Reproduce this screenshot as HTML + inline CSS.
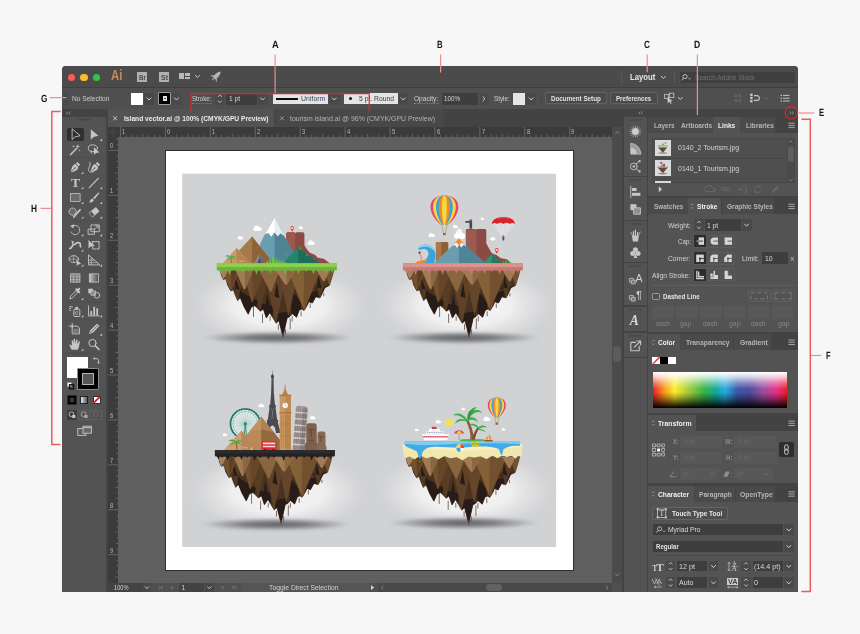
<!DOCTYPE html>
<html lang="en"><head><meta charset="utf-8"><title>Illustrator workspace</title>
<style>
*{box-sizing:border-box;margin:0;padding:0}
html,body{width:860px;height:634px;overflow:hidden;background:#f7f7f7}
body{position:relative;font-family:"Liberation Sans",sans-serif;font-size:7px;color:#ddd}
.a{position:absolute}
.t{position:absolute;white-space:nowrap;line-height:1}
#w{position:absolute;left:0;top:0;width:860px;height:634px;will-change:transform}
svg{overflow:visible}
</style></head>
<body>
<div id="w">
<!-- s_frame -->
<div class="a" style="left:62px;top:66px;width:736px;height:526px;background:#535353;border-radius:4px 4px 0 0"></div>
<div class="a" style="left:62px;top:66px;width:736px;height:21px;background:#4b4b4b;border-radius:4px 4px 0 0"></div>
<div class="a" style="left:62px;top:87px;width:736px;height:1px;background:#3e3e3e;"></div>
<div class="a" style="left:62px;top:88px;width:736px;height:21px;background:#4f4f4f;"></div>
<div class="a" style="left:62px;top:109px;width:736px;height:18px;background:#434343;"></div>
<div class="a" style="left:62px;top:117px;width:46px;height:475px;background:#535353;"></div>
<div class="a" style="left:622px;top:109px;width:176px;height:483px;background:#434343;"></div>
<div class="a" style="left:624px;top:117px;width:22.6px;height:475px;background:#535353;"></div>
<div class="a" style="left:649px;top:117px;width:149px;height:475px;background:#535353;"></div>
<!-- s_top -->
<div class="a" style="left:67.6px;top:73.7px;width:7.6px;height:7.6px;background:#fc5b57;border-radius:50%"></div>
<div class="a" style="left:80px;top:73.7px;width:7.6px;height:7.6px;background:#fbbb2f;border-radius:50%"></div>
<div class="a" style="left:92.6px;top:73.7px;width:7.6px;height:7.6px;background:#2ec840;border-radius:50%"></div>
<div class="t" style="left:111px;top:69px;font-size:13.8px;color:#c48a5e;font-weight:bold;transform:scaleX(0.826);transform-origin:0 0;">Ai</div>
<div class="a" style="left:137px;top:72px;width:10.2px;height:10.2px;background:#b0b0b0;"></div>
<div class="t" style="left:138.6px;top:74px;font-size:7.4px;color:#4c4c4c;font-weight:bold;transform:scaleX(0.851);transform-origin:0 0;">Br</div>
<div class="a" style="left:159.1px;top:72px;width:10.2px;height:10.2px;background:#b0b0b0;"></div>
<div class="t" style="left:160.7px;top:74px;font-size:7.4px;color:#4c4c4c;font-weight:bold;transform:scaleX(0.946);transform-origin:0 0;">St</div>
<div class="a" style="left:179.2px;top:72.9px;width:4.8px;height:6.4px;background:#b9b9b9;"></div>
<div class="a" style="left:184.9px;top:72.9px;width:5.2px;height:2.7px;background:#b9b9b9;"></div>
<div class="a" style="left:184.9px;top:76.6px;width:5.2px;height:2.7px;background:#b9b9b9;"></div>
<div class="t" style="left:629.5px;top:73px;font-size:8.4px;color:#e6e6e6;font-weight:bold;transform:scaleX(0.926);transform-origin:0 0;">Layout</div>
<div class="a" style="left:679.8px;top:72px;width:115.2px;height:11px;background:#3f3f3f;border-radius:1px"></div>
<div class="t" style="left:695px;top:74px;font-size:7.6px;color:#727272;transform:scaleX(0.867);transform-origin:0 0;">Search Adobe Stock</div>
<div class="t" style="left:71.6px;top:95px;font-size:7.5px;color:#c9ccd2;transform:scaleX(0.879);transform-origin:0 0;">No Selection</div>
<div class="a" style="left:131.2px;top:92.5px;width:12.1px;height:12px;background:#ffffff;"></div>
<div class="a" style="left:143.6px;top:92.5px;width:10px;height:12px;background:#474747;"></div>
<div class="a" style="left:158.1px;top:92.1px;width:12.8px;height:12.6px;background:#000;border:1px solid #9a9a9a;border-radius:1px"></div>
<div class="a" style="left:162.6px;top:96.4px;width:4.4px;height:4.4px;background:#e4e4e4;"></div>
<div class="a" style="left:164px;top:97.8px;width:1.7px;height:1.7px;background:#555;"></div>
<div class="a" style="left:171.2px;top:92.5px;width:10.6px;height:12px;background:#4a4a4a;"></div>
<div class="t" style="left:191.6px;top:95px;font-size:7.5px;color:#d0d0d0;transform:scaleX(0.817);transform-origin:0 0;border-bottom:1px dotted #808080;padding-bottom:0.5px">Stroke:</div>
<div class="a" style="left:214.9px;top:92.5px;width:9.5px;height:12px;background:#494949;"></div>
<div class="a" style="left:226.2px;top:92.5px;width:30.8px;height:12px;background:#3e3e3e;"></div>
<div class="t" style="left:228.8px;top:95px;font-size:7.5px;color:#cfd3dc;transform:scaleX(0.895);transform-origin:0 0;">1 pt</div>
<div class="a" style="left:257.6px;top:92.5px;width:10.4px;height:12px;background:#494949;"></div>
<div class="a" style="left:272.9px;top:92.7px;width:55.2px;height:11.8px;background:#e4e4e4;"></div>
<div class="a" style="left:276.2px;top:97.7px;width:21.7px;height:1.9px;background:#0a0a0a;"></div>
<div class="t" style="left:300.6px;top:95px;font-size:7.5px;color:#3d4668;transform:scaleX(0.929);transform-origin:0 0;">Uniform</div>
<div class="a" style="left:329px;top:92.5px;width:10.5px;height:12px;background:#494949;"></div>
<div class="a" style="left:344px;top:92.7px;width:53.7px;height:11.8px;background:#e4e4e4;"></div>
<div class="a" style="left:348.6px;top:97.2px;width:3px;height:3px;background:#111;border-radius:50%"></div>
<div class="t" style="left:359px;top:95px;font-size:7.5px;color:#3a3a3a;transform:scaleX(0.903);transform-origin:0 0;">5 pt. Round</div>
<div class="a" style="left:398.7px;top:92.5px;width:9.6px;height:12px;background:#494949;"></div>
<div class="t" style="left:413.7px;top:95px;font-size:7.5px;color:#d0d0d0;transform:scaleX(0.876);transform-origin:0 0;border-bottom:1px dotted #808080;padding-bottom:0.5px">Opacity:</div>
<div class="a" style="left:442.4px;top:92.5px;width:35.6px;height:12px;background:#3e3e3e;"></div>
<div class="t" style="left:444.4px;top:95px;font-size:7.5px;color:#cfd3dc;transform:scaleX(0.834);transform-origin:0 0;">100%</div>
<div class="a" style="left:480px;top:92.5px;width:9.2px;height:12px;background:#494949;"></div>
<div class="t" style="left:493.6px;top:95px;font-size:7.5px;color:#d0d0d0;transform:scaleX(0.837);transform-origin:0 0;">Style:</div>
<div class="a" style="left:513px;top:92.5px;width:12.3px;height:12px;background:#e6e6e6;"></div>
<div class="a" style="left:525.8px;top:92.5px;width:10.2px;height:12px;background:#494949;"></div>
<div class="a" style="left:544.5px;top:92.2px;width:62.3px;height:12.2px;background:#4a4a4a;border:1px solid #626262;border-radius:2px"></div>
<div class="t" style="left:550.8px;top:95px;font-size:7.4px;color:#e2e2e2;font-weight:bold;transform:scaleX(0.849);transform-origin:0 0;">Document Setup</div>
<div class="a" style="left:610px;top:92.2px;width:47.8px;height:12.2px;background:#4a4a4a;border:1px solid #626262;border-radius:2px"></div>
<div class="t" style="left:616px;top:95px;font-size:7.4px;color:#e2e2e2;font-weight:bold;transform:scaleX(0.833);transform-origin:0 0;">Preferences</div>
<div class="a" style="left:108px;top:109px;width:166.2px;height:18px;background:#535353;"></div>
<div class="a" style="left:274.6px;top:109px;width:169px;height:18px;background:#484848;"></div>
<div class="t" style="left:123.5px;top:115px;font-size:7.4px;color:#ececec;font-weight:bold;transform:scaleX(0.900);transform-origin:0 0;">Island vector.ai @ 100% (CMYK/GPU Preview)</div>
<div class="t" style="left:290.4px;top:115px;font-size:7.6px;color:#b4b4b4;transform:scaleX(0.913);transform-origin:0 0;">tourism island.ai @ 96% (CMYK/GPU Preview)</div>
<svg class="a" style="left:0;top:0" width="860" height="634" viewBox="0 0 860 634"><polyline points="195.15,75.1 197.4,77.5 199.65,75.1" fill="none" stroke="#cfcfcf" stroke-width="1"/><g transform="translate(215.8,76.4) rotate(45)" fill="#b5b5b5"><path d="M0,-7 C2.2,-4.5 2.4,-1 1.8,2.5 L-1.8,2.5 C-2.4,-1 -2.2,-4.5 0,-7Z"/><path d="M-2,0 L-4.6,3.6 L-2,2.6Z"/><path d="M2,0 L4.6,3.6 L2,2.6Z"/><path d="M-1,3.2 L1,3.2 L0,5.4Z"/></g><line x1="621.7" y1="71" x2="621.7" y2="83" stroke="#5c5c5c" stroke-width="1"/><line x1="674.7" y1="71" x2="674.7" y2="83" stroke="#5c5c5c" stroke-width="1"/><polyline points="661.15,76.1 663.4,78.5 665.65,76.1" fill="none" stroke="#cfcfcf" stroke-width="1"/><circle cx="685" cy="76.6" r="2.1" fill="none" stroke="#c4c4c4" stroke-width="0.9"/><line x1="683.4" y1="78.3" x2="681.6" y2="80.4" stroke="#c4c4c4" stroke-width="1"/><polyline points="688.4,78 689.6,79.2 690.8,78" fill="none" stroke="#c4c4c4" stroke-width="0.8"/><line x1="66" y1="92" x2="66" y2="105" stroke="#3c3c3c" stroke-width="1.6" stroke-dasharray="1 1"/><polyline points="146.75,97.6 149,100 151.25,97.6" fill="none" stroke="#cfcfcf" stroke-width="1"/><polyline points="174.25,97.6 176.5,100 178.75,97.6" fill="none" stroke="#cfcfcf" stroke-width="1"/><polyline points="218,96.8 219.8,94.8 221.6,96.8" fill="none" stroke="#c8c8c8" stroke-width="0.9"/><polyline points="218,100.6 219.8,102.6 221.6,100.6" fill="none" stroke="#c8c8c8" stroke-width="0.9"/><polyline points="260.35,97.6 262.6,100 264.85,97.6" fill="none" stroke="#cfcfcf" stroke-width="1"/><polyline points="332.05,97.6 334.3,100 336.55,97.6" fill="none" stroke="#cfcfcf" stroke-width="1"/><polyline points="401.05,97.6 403.3,100 405.55,97.6" fill="none" stroke="#cfcfcf" stroke-width="1"/><polyline points="482.6,96.4 485,98.7 482.6,101" fill="none" stroke="#cfcfcf" stroke-width="1"/><polyline points="528.95,97.6 531.2,100 533.45,97.6" fill="none" stroke="#cfcfcf" stroke-width="1"/><line x1="541.3" y1="92" x2="541.3" y2="105" stroke="#454545" stroke-width="1"/><rect x="664.6" y="94.4" width="4" height="4" fill="none" stroke="#bdbdbd" stroke-width="0.9"/><rect x="669.4" y="93.2" width="4.4" height="4.4" fill="none" stroke="#bdbdbd" stroke-width="0.9"/><path d="M667.6,97 L667.6,103.4 L669.4,101.8 L670.6,104 L671.6,103.4 L670.4,101.4 L672.6,101.2Z" fill="#c8c8c8"/><polyline points="678.05,97.1 680.3,99.5 682.55,97.1" fill="none" stroke="#cfcfcf" stroke-width="1"/><g fill="#646464"><rect x="734.6" y="94.6" width="2.6" height="2.6"/><rect x="738.8" y="94.6" width="2.6" height="2.6"/><rect x="734.6" y="99" width="2.6" height="2.6"/><rect x="738.8" y="99" width="2.6" height="2.6"/></g><g fill="#c6c6c6"><rect x="750.2" y="93.6" width="2.4" height="2.4"/><rect x="750.2" y="96.8" width="2.4" height="2.4"/><rect x="750.2" y="100" width="2.4" height="2.4"/></g><path d="M754,95.6 h3 a2.4,2.4 0 0 1 0,4.8 h-3" fill="none" stroke="#c6c6c6" stroke-width="1.1"/><polyline points="764.1,97.2 766.3,99.4 768.5,97.2" fill="none" stroke="#6c6c6c" stroke-width="1"/><g stroke="#c6c6c6" stroke-width="1"><line x1="783" y1="95.4" x2="789.6" y2="95.4"/><line x1="783" y1="98.2" x2="789.6" y2="98.2"/><line x1="783" y1="101" x2="789.6" y2="101"/></g><g fill="#c6c6c6"><rect x="780.6" y="94.8" width="1.3" height="1.3"/><rect x="780.6" y="97.6" width="1.3" height="1.3"/><rect x="780.6" y="100.4" width="1.3" height="1.3"/></g><path d="M113.2,116.4 l3.8,3.8 M117,116.4 l-3.8,3.8" stroke="#d0d0d0" stroke-width="0.9" fill="none"/><path d="M280.1,116.4 l3.8,3.8 M283.9,116.4 l-3.8,3.8" stroke="#9c9c9c" stroke-width="0.9" fill="none"/></svg>
<!-- s_tools -->
<div class="a" style="left:62px;top:109.5px;width:44.3px;height:7.3px;background:#434343;"></div>
<div class="a" style="left:106.3px;top:109px;width:2px;height:483px;background:#444;"></div>
<div class="a" style="left:66.9px;top:127.5px;width:17.1px;height:13.4px;background:#2f2f2f;border-radius:2px"></div>
<div class="t" style="left:70.8px;top:176px;font-size:13.4px;color:#c6c6c6;font-weight:bold;font-family:'Liberation Serif',serif;transform:scaleX(1.007);transform-origin:0 0;">T</div>
<div class="a" style="left:66.9px;top:356.9px;width:21.1px;height:21.2px;background:#fff;"></div>
<div class="a" style="left:77.2px;top:367.5px;width:22px;height:22.4px;background:#000;border:1px solid #8c8c8c;border-radius:1px"></div>
<div class="a" style="left:82.1px;top:372.6px;width:12.2px;height:12.3px;background:#555;border:1px solid #b4b4b4"></div>
<div class="a" style="left:67px;top:394.6px;width:10.2px;height:10.7px;background:#2c2c2c;"></div>
<div class="a" style="left:68.3px;top:396px;width:7.6px;height:7.8px;background:#050505;"></div>
<div class="a" style="left:70.3px;top:398px;width:3.6px;height:3.8px;background:#3c3c3c;"></div>
<div class="a" style="left:80.2px;top:396px;width:8px;height:8px;background:linear-gradient(90deg,#e8e8e8,#555);border:1px solid #222"></div>
<div class="a" style="left:92.6px;top:396px;width:8px;height:8px;background:#fff;border:1px solid #333"></div>
<div class="a" style="left:67px;top:409.8px;width:35.2px;height:10.2px;background:transparent;border:1px solid #5e5e5e;border-radius:1px"></div>
<div class="a" style="left:67px;top:409.8px;width:10.4px;height:10.2px;background:#3c3c3c;"></div>
<svg class="a" style="left:0;top:0" width="860" height="634" viewBox="0 0 860 634"><polyline points="67.95,111.7 66.45,113 67.95,114.3" fill="none" stroke="#9a9a9a" stroke-width="0.8"/><polyline points="70.35,111.7 68.85,113 70.35,114.3" fill="none" stroke="#9a9a9a" stroke-width="0.8"/><line x1="78" y1="119.6" x2="91" y2="119.6" stroke="#3a3a3a" stroke-width="1.6" stroke-dasharray="1 1.3"/><line x1="66" y1="157.4" x2="103" y2="157.4" stroke="#4e4e4e" stroke-width="1"/><line x1="66" y1="220.6" x2="103" y2="220.6" stroke="#4e4e4e" stroke-width="1"/><line x1="66" y1="268.8" x2="103" y2="268.8" stroke="#4e4e4e" stroke-width="1"/><line x1="66" y1="302.3" x2="103" y2="302.3" stroke="#4e4e4e" stroke-width="1"/><line x1="66" y1="320" x2="103" y2="320" stroke="#4e4e4e" stroke-width="1"/><line x1="66" y1="353.3" x2="103" y2="353.3" stroke="#4e4e4e" stroke-width="1"/><g transform="translate(75.2,134.5)" fill="none" stroke="#c6c6c6" stroke-width="1" stroke-linejoin="round" stroke-linecap="round"><path d="M-3.1,-5.3 L-3.1,5.3 L-0.6,2.6 L4.5,1.3Z" stroke-width="0.9"/></g><g transform="translate(93.9,134.5)" fill="none" stroke="#c6c6c6" stroke-width="1" stroke-linejoin="round" stroke-linecap="round"><path d="M-3.1,-5.3 L-3.1,5.3 L-0.4,2.4 L4.5,1.3Z" fill="#c6c6c6" stroke="none"/></g><path d="M102.1,138.7 v2.2 h-2.2Z" fill="#d0d0d0"/><g transform="translate(75.2,149.6)" fill="none" stroke="#c6c6c6" stroke-width="1" stroke-linejoin="round" stroke-linecap="round"><path d="M-4.6,5 L1.6,-1.4" stroke-width="1.5"/><path d="M2.6,-5.4 l0.6,1.5 l1.5,0.6 l-1.5,0.6 l-0.6,1.5 l-0.6,-1.5 l-1.5,-0.6 l1.5,-0.6Z M-1.6,-4.6 l0.4,0.9 l0.9,0.4 l-0.9,0.4 l-0.4,0.9 l-0.4,-0.9 l-0.9,-0.4 l0.9,-0.4Z M4.2,-0.2 l0.3,0.7 l0.7,0.3 l-0.7,0.3 l-0.3,0.7 l-0.3,-0.7 l-0.7,-0.3 l0.7,-0.3Z" fill="#c6c6c6" stroke="none"/></g><g transform="translate(93.9,149.6)" fill="none" stroke="#c6c6c6" stroke-width="1" stroke-linejoin="round" stroke-linecap="round"><ellipse cx="-1" cy="-1.4" rx="4.6" ry="3.4" stroke-width="0.9"/><path d="M-3,1.2 c-1,1.6 0.6,3 1.4,1.6" stroke-width="0.8"/><path d="M0,-2.6 L0,5.4 L2,3.4 L5.4,3Z" fill="#c6c6c6" stroke="none"/></g><g transform="translate(75.2,167.5)" fill="none" stroke="#c6c6c6" stroke-width="1" stroke-linejoin="round" stroke-linecap="round"><path d="M2.2,-5.6 L5,-2.8 L3.4,-1.2 L0.6,-4Z M0,-3.6 L3,-0.6 C3,2 1,3.6 -4.6,4.8 C-3.4,-0.8 -2.2,-3 0,-3.6Z" fill="#c6c6c6" stroke="none"/><path d="M-4.2,4.4 L-0.6,0.8" stroke="#535353" stroke-width="0.8"/><circle cx="-0.3" cy="0.5" r="0.8" fill="#535353" stroke="none"/></g><path d="M83.4,171.7 v2.2 h-2.2Z" fill="#d0d0d0"/><g transform="translate(95.1,167.5)" fill="none" stroke="#c6c6c6" stroke-width="1" stroke-linejoin="round" stroke-linecap="round"><path d="M2.2,-5.6 L5,-2.8 L3.4,-1.2 L0.6,-4Z M0,-3.6 L3,-0.6 C3,2 1,3.6 -4.6,4.8 C-3.4,-0.8 -2.2,-3 0,-3.6Z" fill="#c6c6c6" stroke="none"/><path d="M-4.2,4.4 L-0.6,0.8" stroke="#535353" stroke-width="0.8"/><circle cx="-0.3" cy="0.5" r="0.8" fill="#535353" stroke="none"/><path d="M-5.4,-5.2 c2.4,2 -2.4,5.4 -1,8.6 c1,1.6 3,1 4.4,1" stroke-width="0.9"/></g><path d="M83.4,186.9 v2.2 h-2.2Z" fill="#d0d0d0"/><g transform="translate(93.9,182.7)" fill="none" stroke="#c6c6c6" stroke-width="1" stroke-linejoin="round" stroke-linecap="round"><path d="M-4.6,5 L4.4,-4.4" stroke-width="1.2"/></g><path d="M102.1,186.9 v2.2 h-2.2Z" fill="#d0d0d0"/><g transform="translate(75.2,197.6)" fill="none" stroke="#c6c6c6" stroke-width="1" stroke-linejoin="round" stroke-linecap="round"><rect x="-4.7" y="-4" width="9.6" height="7.8" fill="#6b6b6b" stroke-width="0.8" stroke-linejoin="miter"/></g><path d="M83.4,201.8 v2.2 h-2.2Z" fill="#d0d0d0"/><g transform="translate(93.9,197.6)" fill="none" stroke="#c6c6c6" stroke-width="1" stroke-linejoin="round" stroke-linecap="round"><path d="M4.6,-5.4 L5.4,-4.4 L0.6,1.6 L-0.8,0.4Z M-1.6,1 L0,2.4 C-0.6,4.6 -2.6,5 -5,5 C-3.6,4 -3.6,1.6 -1.6,1Z" fill="#c6c6c6" stroke="none"/></g><path d="M102.1,201.8 v2.2 h-2.2Z" fill="#d0d0d0"/><g transform="translate(75.2,212.2)" fill="none" stroke="#c6c6c6" stroke-width="1" stroke-linejoin="round" stroke-linecap="round"><circle cx="-2.6" cy="-0.6" r="3.6" fill="#6b6b6b" stroke-width="0.8" stroke-dasharray="1.2 0.7"/><path d="M-1.4,4.8 L4.8,-2.4" stroke-width="1.8"/></g><path d="M83.4,216.4 v2.2 h-2.2Z" fill="#d0d0d0"/><g transform="translate(93.9,212.2)" fill="none" stroke="#c6c6c6" stroke-width="1" stroke-linejoin="round" stroke-linecap="round"><g transform="rotate(-40)"><rect x="-4.6" y="-2.8" width="9.4" height="5.8" rx="0.8" fill="#c6c6c6" stroke="none"/><rect x="-4.1" y="-2.3" width="2.6" height="4.8" fill="#535353" stroke="none"/></g></g><path d="M102.1,216.4 v2.2 h-2.2Z" fill="#d0d0d0"/><g transform="translate(75.2,229.9)" fill="none" stroke="#c6c6c6" stroke-width="1" stroke-linejoin="round" stroke-linecap="round"><path d="M-2.4,-3.8 A4.6,4.6 0 1 1 -4.4,1.6" stroke-width="0.9" stroke-dasharray="2 0.8"/><path d="M-5.2,-4 L-1,-5.6 L-1.8,-1.6Z" fill="#c6c6c6" stroke="none"/></g><path d="M83.4,234.1 v2.2 h-2.2Z" fill="#d0d0d0"/><g transform="translate(93.9,229.9)" fill="none" stroke="#c6c6c6" stroke-width="1" stroke-linejoin="round" stroke-linecap="round"><rect x="-5.4" y="-0.8" width="6" height="5.2" stroke-width="0.9"/><rect x="-2.6" y="-5" width="8" height="6.8" stroke-width="0.9"/><path d="M0.6,-0.6 L4,-3.8 M4.2,-1.6 V-4 H1.8" stroke-width="0.8"/></g><path d="M102.1,234.1 v2.2 h-2.2Z" fill="#d0d0d0"/><g transform="translate(75.2,245)" fill="none" stroke="#c6c6c6" stroke-width="1" stroke-linejoin="round" stroke-linecap="round"><path d="M-5.4,3.4 C-2.6,3.4 -3.6,-0.4 -1.4,-0.4 C0.8,-0.4 0.6,-3.6 4.6,-2 C5.6,-1 4.6,1.4 5.4,1.8" stroke-width="1.7"/><path d="M-3.8,-4.8 L-1,-3 L-3,-0.6Z" fill="#c6c6c6" stroke="none"/></g><path d="M83.4,249.2 v2.2 h-2.2Z" fill="#d0d0d0"/><g transform="translate(93.9,245)" fill="none" stroke="#c6c6c6" stroke-width="1" stroke-linejoin="round" stroke-linecap="round"><rect x="-1.2" y="-3.4" width="6.4" height="7.4" stroke-width="1" stroke-dasharray="1.4 1"/><path d="M-5.4,-5 L-5.4,3.6 L-3.2,1.6 L0.8,0.8Z" fill="#c6c6c6" stroke="none"/></g><g transform="translate(75.2,260.1)" fill="none" stroke="#c6c6c6" stroke-width="1" stroke-linejoin="round" stroke-linecap="round"><ellipse cx="-1.4" cy="-1" rx="4.8" ry="3.4" stroke-width="0.9"/><path d="M-1.6,-4.4 V2.2 M-6,-1 H3" stroke-width="0.6"/><path d="M1.4,-0.4 L1.4,6 L3,4.4 L6,4Z" fill="#c6c6c6" stroke="none"/></g><path d="M83.4,264.3 v2.2 h-2.2Z" fill="#d0d0d0"/><g transform="translate(93.9,260.1)" fill="none" stroke="#c6c6c6" stroke-width="1" stroke-linejoin="round" stroke-linecap="round"><path d="M-5.4,-4.8 V4.8 H5.6Z" stroke-width="0.9"/><path d="M-5.4,0 L0.2,0.2 M-2.6,-2.4 V4.8 M-5.4,2.6 H3" stroke-width="0.7"/></g><path d="M102.1,264.3 v2.2 h-2.2Z" fill="#d0d0d0"/><g transform="translate(75.2,278)" fill="none" stroke="#c6c6c6" stroke-width="1" stroke-linejoin="round" stroke-linecap="round"><rect x="-4.6" y="-4.1" width="9.3" height="8.2" fill="#777" stroke-width="0.8" stroke-linejoin="miter"/><path d="M-4.6,-1.4 C-2,-3 2,0.4 4.7,-1.6 M-4.6,1.6 C-2,0.4 2,3.2 4.7,1.2 M-1.8,-4.1 C-0.4,-2 -3,2 -1.6,4.1 M1.8,-4.1 C3,-2 0.6,2 2,4.1" stroke-width="0.6"/></g><defs><linearGradient id="tg" x1="0" x2="1" y1="0" y2="0"><stop offset="0" stop-color="#c8c8c8"/><stop offset="1" stop-color="#4a4a4a"/></linearGradient></defs><g transform="translate(93.9,278)" fill="none" stroke="#c6c6c6" stroke-width="1" stroke-linejoin="round" stroke-linecap="round"><rect x="-4.6" y="-4.1" width="9.3" height="8.2" fill="url(#tg)" stroke-width="0.8" stroke-linejoin="miter"/></g><g transform="translate(75.2,293.5)" fill="none" stroke="#c6c6c6" stroke-width="1" stroke-linejoin="round" stroke-linecap="round"><path d="M-5.2,5 L-4.6,2.6 L0.8,-2.8 L2.6,-1 L-2.8,4.4Z" stroke-width="0.9"/><path d="M1,-4.2 L4,-1.2 M2.2,-3 L4,-4.8" stroke-width="2"/></g><path d="M83.4,297.7 v2.2 h-2.2Z" fill="#d0d0d0"/><g transform="translate(93.9,293.5)" fill="none" stroke="#c6c6c6" stroke-width="1" stroke-linejoin="round" stroke-linecap="round"><rect x="-5.6" y="-4.8" width="4.6" height="4.6" fill="#c6c6c6" stroke="none"/><rect x="-2.8" y="-2.6" width="4.4" height="4.4" fill="#8a8a8a" stroke-width="0.7"/><circle cx="3" cy="1.8" r="2.8" stroke-width="0.9"/></g><g transform="translate(75.2,310.9)" fill="none" stroke="#c6c6c6" stroke-width="1" stroke-linejoin="round" stroke-linecap="round"><rect x="-1.4" y="-1.6" width="6" height="7.2" rx="1" stroke-width="1"/><rect x="0.2" y="-4" width="2.8" height="2.2" fill="#c6c6c6" stroke="none"/><path d="M-5.6,-4.2 h3 M-5.6,-2.4 h1.6 M-5.6,-0.6 h1.6" stroke-width="0.9" stroke-dasharray="1 0.8"/><path d="M2.6,1 a1.4,1.4 0 1 0 0,2" stroke-width="0.8"/></g><path d="M83.4,315.1 v2.2 h-2.2Z" fill="#d0d0d0"/><g transform="translate(93.9,310.9)" fill="none" stroke="#c6c6c6" stroke-width="1" stroke-linejoin="round" stroke-linecap="round"><path d="M-5.4,-5 V5 H5.6" stroke-width="0.9"/><rect x="-3.6" y="0" width="1.8" height="4.6" fill="#c6c6c6" stroke="none"/><rect x="-0.6" y="-4.2" width="1.8" height="8.8" fill="#c6c6c6" stroke="none"/><rect x="2.4" y="-2.6" width="1.8" height="7.2" fill="#c6c6c6" stroke="none"/></g><path d="M102.1,315.1 v2.2 h-2.2Z" fill="#d0d0d0"/><g transform="translate(75.2,329.3)" fill="none" stroke="#c6c6c6" stroke-width="1" stroke-linejoin="round" stroke-linecap="round"><path d="M-3,-6 V-1.6 M-6,-3.2 H2.2 L4.2,-1.2 V4.6 H-3 V-3.2" stroke-width="1"/><rect x="-2.4" y="-0.6" width="6" height="4.6" fill="#7a7a7a" stroke="none"/></g><g transform="translate(93.9,329.3)" fill="none" stroke="#c6c6c6" stroke-width="1" stroke-linejoin="round" stroke-linecap="round"><path d="M3,-5.6 L5.6,-3.6 L-0.6,3.2 L-5,5 L-3.6,1Z" fill="#c6c6c6" stroke="none"/><path d="M-3.4,3.6 L3.6,-3.8" stroke="#535353" stroke-width="0.7"/></g><path d="M102.1,333.5 v2.2 h-2.2Z" fill="#d0d0d0"/><g transform="translate(75.2,344.4)" fill="none" stroke="#c6c6c6" stroke-width="1" stroke-linejoin="round" stroke-linecap="round"><path d="M-3.6,5.4 C-4.4,3.2 -6,1.6 -5.6,0.4 C-4.8,-0.2 -4,0.8 -3.2,1.6 L-3.6,-3.4 C-3.4,-4.4 -2.4,-4.4 -2.2,-3.4 L-1.8,-0.6 L-1.6,-4.8 C-1.4,-5.8 -0.2,-5.8 0,-4.8 L0.2,-0.6 L1,-4.2 C1.4,-5.2 2.4,-5 2.4,-4 L2.2,0 L3.4,-2.6 C4,-3.4 4.8,-3 4.6,-2 C4,0.8 3.8,3.2 2.4,5.4Z" fill="#c6c6c6" stroke="none"/></g><path d="M83.4,348.6 v2.2 h-2.2Z" fill="#d0d0d0"/><g transform="translate(93.9,344.4)" fill="none" stroke="#c6c6c6" stroke-width="1" stroke-linejoin="round" stroke-linecap="round"><circle cx="-1.4" cy="-1.4" r="3.6" stroke-width="1"/><path d="M1.4,1.4 L5,5" stroke-width="1.6"/></g><path d="M94.4,358.4 h1.6 a2.6,2.6 0 0 1 2.6,2.6 v1.6" fill="none" stroke="#c6c6c6" stroke-width="0.9"/><path d="M94.8,356.9 L93,358.4 L94.8,359.9Z M97.1,362.2 L98.6,364 L100.1,362.2Z" fill="#c6c6c6"/><rect x="67.4" y="382.6" width="4" height="4" fill="#fff" stroke="#999" stroke-width="0.5"/><rect x="69.6" y="384.8" width="4" height="4" fill="none" stroke="#111" stroke-width="1.4"/><path d="M93.4,403.2 L99.8,396.8" stroke="#ee1111" stroke-width="1.8"/><circle cx="71.4" cy="414.2" r="2.4" fill="none" stroke="#c4c4c4" stroke-width="0.9"/><rect x="72.2" y="415" width="3.2" height="3" fill="#c4c4c4"/><circle cx="83.60000000000001" cy="414.2" r="2.4" fill="none" stroke="#a8a8a8" stroke-width="0.9"/><rect x="84.4" y="415" width="3.2" height="3" fill="#a8a8a8"/><circle cx="95.60000000000001" cy="414.2" r="2.4" fill="none" stroke="#6a6a6a" stroke-width="0.9"/><line x1="77.6" y1="410" x2="77.6" y2="420" stroke="#5e5e5e"/><line x1="90" y1="410" x2="90" y2="420" stroke="#5e5e5e"/><rect x="77.8" y="428.4" width="8" height="7" fill="#5e5e5e" stroke="#c6c6c6" stroke-width="0.9"/><rect x="83" y="426.2" width="8.4" height="7" fill="#6a6a6a" stroke="#c6c6c6" stroke-width="0.9"/><line x1="83" y1="427.6" x2="91.4" y2="427.6" stroke="#c6c6c6" stroke-width="0.9"/></svg>
<!-- s_canvas -->
<div class="a" style="left:108.3px;top:127px;width:504px;height:10px;background:#3b3b3b;"></div>
<div class="a" style="left:108.3px;top:137px;width:10px;height:446px;background:#3b3b3b;"></div>
<div class="a" style="left:118.3px;top:137px;width:494px;height:446px;background:#5f5f5f;"></div>
<svg class="a" style="left:0;top:0" width="860" height="634" viewBox="0 0 860 634"><path d="M120.48,127V137M165.4,127V137M210.32,127V137M255.24,127V137M300.16,127V137M345.08,127V137M390,127V137M434.92,127V137M479.84,127V137M524.76,127V137M569.68,127V137M108.3,150.4H118.3M108.3,195.32H118.3M108.3,240.24H118.3M108.3,285.16H118.3M108.3,330.08H118.3M108.3,375H118.3M108.3,419.92H118.3M108.3,464.84H118.3M108.3,509.76H118.3M108.3,554.68H118.3" stroke="#666666" stroke-width="1" fill="none"/><path d="M126.09,135.2V137M131.71,134.6V137M137.32,135.2V137M142.94,133.8V137M148.56,135.2V137M154.17,134.6V137M159.78,135.2V137M171.02,135.2V137M176.63,134.6V137M182.25,135.2V137M187.86,133.8V137M193.48,135.2V137M199.09,134.6V137M204.71,135.2V137M215.94,135.2V137M221.55,134.6V137M227.16,135.2V137M232.78,133.8V137M238.39,135.2V137M244.01,134.6V137M249.62,135.2V137M260.86,135.2V137M266.47,134.6V137M272.09,135.2V137M277.7,133.8V137M283.31,135.2V137M288.93,134.6V137M294.55,135.2V137M305.77,135.2V137M311.39,134.6V137M317,135.2V137M322.62,133.8V137M328.23,135.2V137M333.85,134.6V137M339.46,135.2V137M350.7,135.2V137M356.31,134.6V137M361.93,135.2V137M367.54,133.8V137M373.16,135.2V137M378.77,134.6V137M384.39,135.2V137M395.62,135.2V137M401.23,134.6V137M406.85,135.2V137M412.46,133.8V137M418.07,135.2V137M423.69,134.6V137M429.31,135.2V137M440.53,135.2V137M446.15,134.6V137M451.76,135.2V137M457.38,133.8V137M462.99,135.2V137M468.61,134.6V137M474.22,135.2V137M485.46,135.2V137M491.07,134.6V137M496.69,135.2V137M502.3,133.8V137M507.92,135.2V137M513.53,134.6V137M519.14,135.2V137M530.38,135.2V137M535.99,134.6V137M541.61,135.2V137M547.22,133.8V137M552.84,135.2V137M558.45,134.6V137M564.06,135.2V137M575.3,135.2V137M580.91,134.6V137M586.53,135.2V137M592.14,133.8V137M597.76,135.2V137M603.37,134.6V137M608.99,135.2V137M115.9,139.17H118.3M116.5,144.78H118.3M116.5,156.02H118.3M115.9,161.63H118.3M116.5,167.25H118.3M115.1,172.86H118.3M116.5,178.48H118.3M115.9,184.09H118.3M116.5,189.71H118.3M116.5,200.94H118.3M115.9,206.55H118.3M116.5,212.16H118.3M115.1,217.78H118.3M116.5,223.39H118.3M115.9,229.01H118.3M116.5,234.62H118.3M116.5,245.86H118.3M115.9,251.47H118.3M116.5,257.09H118.3M115.1,262.7H118.3M116.5,268.31H118.3M115.9,273.93H118.3M116.5,279.55H118.3M116.5,290.77H118.3M115.9,296.39H118.3M116.5,302H118.3M115.1,307.62H118.3M116.5,313.23H118.3M115.9,318.85H118.3M116.5,324.46H118.3M116.5,335.7H118.3M115.9,341.31H118.3M116.5,346.93H118.3M115.1,352.54H118.3M116.5,358.16H118.3M115.9,363.77H118.3M116.5,369.39H118.3M116.5,380.62H118.3M115.9,386.23H118.3M116.5,391.85H118.3M115.1,397.46H118.3M116.5,403.07H118.3M115.9,408.69H118.3M116.5,414.31H118.3M116.5,425.53H118.3M115.9,431.15H118.3M116.5,436.76H118.3M115.1,442.38H118.3M116.5,447.99H118.3M115.9,453.61H118.3M116.5,459.22H118.3M116.5,470.46H118.3M115.9,476.07H118.3M116.5,481.69H118.3M115.1,487.3H118.3M116.5,492.92H118.3M115.9,498.53H118.3M116.5,504.15H118.3M116.5,515.38H118.3M115.9,520.99H118.3M116.5,526.61H118.3M115.1,532.22H118.3M116.5,537.84H118.3M115.9,543.45H118.3M116.5,549.06H118.3M116.5,560.3H118.3M115.9,565.91H118.3M116.5,571.53H118.3M115.1,577.14H118.3" stroke="#666666" stroke-width="0.9" fill="none"/><path d="M113.3,128 V136.4 M109,132 H117.6" stroke="#5a5a5a" stroke-width="0.8" stroke-dasharray="1 1" fill="none"/></svg>
<div class="t" style="left:122.28px;top:128px;font-size:7.2px;color:#b8b8b8;transform:scaleX(0.799);transform-origin:0 0;">1</div>
<div class="t" style="left:167.2px;top:128px;font-size:7.2px;color:#b8b8b8;transform:scaleX(0.799);transform-origin:0 0;">0</div>
<div class="t" style="left:212.12px;top:128px;font-size:7.2px;color:#b8b8b8;transform:scaleX(0.799);transform-origin:0 0;">1</div>
<div class="t" style="left:257.04px;top:128px;font-size:7.2px;color:#b8b8b8;transform:scaleX(0.799);transform-origin:0 0;">2</div>
<div class="t" style="left:301.96px;top:128px;font-size:7.2px;color:#b8b8b8;transform:scaleX(0.799);transform-origin:0 0;">3</div>
<div class="t" style="left:346.88px;top:128px;font-size:7.2px;color:#b8b8b8;transform:scaleX(0.799);transform-origin:0 0;">4</div>
<div class="t" style="left:391.8px;top:128px;font-size:7.2px;color:#b8b8b8;transform:scaleX(0.799);transform-origin:0 0;">5</div>
<div class="t" style="left:436.72px;top:128px;font-size:7.2px;color:#b8b8b8;transform:scaleX(0.799);transform-origin:0 0;">6</div>
<div class="t" style="left:481.64px;top:128px;font-size:7.2px;color:#b8b8b8;transform:scaleX(0.799);transform-origin:0 0;">7</div>
<div class="t" style="left:526.56px;top:128px;font-size:7.2px;color:#b8b8b8;transform:scaleX(0.799);transform-origin:0 0;">8</div>
<div class="t" style="left:571.48px;top:128px;font-size:7.2px;color:#b8b8b8;transform:scaleX(0.799);transform-origin:0 0;">9</div>
<div class="t" style="left:110px;top:142px;font-size:7.2px;color:#b8b8b8;transform:scaleX(0.799);transform-origin:0 0;">0</div>
<div class="t" style="left:110px;top:187px;font-size:7.2px;color:#b8b8b8;transform:scaleX(0.799);transform-origin:0 0;">1</div>
<div class="t" style="left:110px;top:232px;font-size:7.2px;color:#b8b8b8;transform:scaleX(0.799);transform-origin:0 0;">2</div>
<div class="t" style="left:110px;top:277px;font-size:7.2px;color:#b8b8b8;transform:scaleX(0.799);transform-origin:0 0;">3</div>
<div class="t" style="left:110px;top:322px;font-size:7.2px;color:#b8b8b8;transform:scaleX(0.799);transform-origin:0 0;">4</div>
<div class="t" style="left:110px;top:367px;font-size:7.2px;color:#b8b8b8;transform:scaleX(0.799);transform-origin:0 0;">5</div>
<div class="t" style="left:110px;top:412px;font-size:7.2px;color:#b8b8b8;transform:scaleX(0.799);transform-origin:0 0;">6</div>
<div class="t" style="left:110px;top:457px;font-size:7.2px;color:#b8b8b8;transform:scaleX(0.799);transform-origin:0 0;">7</div>
<div class="t" style="left:110px;top:502px;font-size:7.2px;color:#b8b8b8;transform:scaleX(0.799);transform-origin:0 0;">8</div>
<div class="t" style="left:110px;top:547px;font-size:7.2px;color:#b8b8b8;transform:scaleX(0.799);transform-origin:0 0;">9</div>
<div class="a" style="left:165px;top:150px;width:409.2px;height:420.8px;background:#2e2e2e;"></div>
<div class="a" style="left:165.8px;top:150.9px;width:407.3px;height:418.8px;background:#fff;"></div>
<div class="a" style="left:612.2px;top:127px;width:9.8px;height:456px;background:#4b4b4b;"></div>
<div class="a" style="left:613px;top:346px;width:8.4px;height:16px;background:#5c5c5c;border-radius:4px"></div>
<div class="a" style="left:108.3px;top:583px;width:513.7px;height:9px;background:#505050;"></div>
<div class="a" style="left:108.3px;top:583px;width:33.6px;height:9px;background:#434343;"></div>
<div class="a" style="left:142.4px;top:583px;width:9px;height:9px;background:#474747;"></div>
<div class="a" style="left:179.2px;top:583px;width:25.2px;height:9px;background:#434343;"></div>
<div class="a" style="left:204.9px;top:583px;width:9px;height:9px;background:#474747;"></div>
<div class="a" style="left:242px;top:583px;width:128px;height:9px;background:#555;"></div>
<div class="a" style="left:378px;top:583px;width:234px;height:9px;background:#484848;"></div>
<div class="a" style="left:486.3px;top:583.8px;width:16px;height:7.6px;background:#626262;border-radius:4px"></div>
<div class="t" style="left:113.6px;top:585px;font-size:6.6px;color:#d4d4d4;transform:scaleX(0.859);transform-origin:0 0;">100%</div>
<div class="t" style="left:181.6px;top:585px;font-size:6.6px;color:#d4d4d4;">1</div>
<div class="t" style="left:269.3px;top:585px;font-size:6.8px;color:#d0d0d0;transform:scaleX(0.999);transform-origin:0 0;">Toggle Direct Selection</div>
<svg class="a" style="left:0;top:0" width="860" height="634" viewBox="0 0 860 634"><polyline points="144.9,586.5 146.9,588.7 148.9,586.5" fill="none" stroke="#cfcfcf" stroke-width="0.9"/><polyline points="207.4,586.5 209.4,588.7 211.4,586.5" fill="none" stroke="#cfcfcf" stroke-width="0.9"/><path d="M162.6,585.4 L159.8,587.6 L162.6,589.8Z M173,585.4 L170.2,587.6 L173,589.8Z M221.8,585.4 L224.6,587.6 L221.8,589.8Z M232.4,585.4 L235.2,587.6 L232.4,589.8Z" fill="#6c6c6c"/><path d="M159.2,585.4 V589.8 M236,585.4 V589.8" stroke="#6c6c6c" stroke-width="0.9"/><path d="M371,585.2 L374.2,587.6 L371,590Z" fill="#d8d8d8"/><polyline points="383.4,585.8 381.4,587.6 383.4,589.4" fill="none" stroke="#8a8a8a" stroke-width="0.9"/><polyline points="606.2,585.8 608.2,587.6 606.2,589.4" fill="none" stroke="#8a8a8a" stroke-width="0.9"/><polyline points="615.1,133.7 617.2,131.5 619.3,133.7" fill="none" stroke="#8a8a8a" stroke-width="0.9"/><polyline points="615.1,573.5 617.2,575.7 619.3,573.5" fill="none" stroke="#8a8a8a" stroke-width="0.9"/></svg>
<!-- s_art -->
<svg class="a" style="left:0;top:0" width="860" height="634" viewBox="0 0 860 634"><defs><radialGradient id="glow"><stop offset="0" stop-color="#f8f8f8" stop-opacity="1"/><stop offset="0.5" stop-color="#f2f2f2" stop-opacity="0.9"/><stop offset="0.8" stop-color="#e4e4e5" stop-opacity="0.45"/><stop offset="1" stop-color="#d1d2d4" stop-opacity="0"/></radialGradient><radialGradient id="shad"><stop offset="0" stop-color="#4a4c51" stop-opacity="0.85"/><stop offset="0.4" stop-color="#54565b" stop-opacity="0.72"/><stop offset="0.75" stop-color="#6a6c70" stop-opacity="0.34"/><stop offset="1" stop-color="#9a9b9e" stop-opacity="0"/></radialGradient><filter id="bl" x="-20%" y="-100%" width="140%" height="300%"><feGaussianBlur stdDeviation="1.5"/></filter><clipPath id="rkc"><polygon points="3.4,6.5 4.6,12 6.4,16.2 9,15.4 11,22 14,27.6 16.5,26.4 18.5,32 20.8,37.4 23.5,34.5 27,43 31.4,51 34.5,44 38,42.4 41,45.4 43.5,48 46.5,45.8 49.5,54.8 53,49.4 56,54.4 59.3,60 62,57.4 64,65 66.2,73.6 68.5,63 70.4,54.6 73,53.4 75.5,50.4 79.8,54 82.5,46.8 85,46 87.3,47.3 90,43 92,38.4 95.6,39.7 99,33.4 103.2,34.7 106,29 108,24.4 110,23.4 112.6,22.3 114.5,16 116,11 117,6.5" fill="#000" stroke="#000" stroke-width="0.7" stroke-linejoin="round"/></clipPath></defs><rect x="182.2" y="173.7" width="373.9" height="373.3" fill="#d1d2d4"/><ellipse cx="279.8" cy="305.3" rx="92" ry="42" fill="url(#glow)"/><ellipse cx="277.8" cy="337.7" rx="78" ry="6.6" fill="url(#shad)" filter="url(#bl)"/><ellipse cx="465.9" cy="305.3" rx="92" ry="42" fill="url(#glow)"/><ellipse cx="463.9" cy="337.7" rx="78" ry="6.6" fill="url(#shad)" filter="url(#bl)"/><ellipse cx="277.9" cy="492" rx="92" ry="42" fill="url(#glow)"/><ellipse cx="275.9" cy="524.4" rx="78" ry="6.6" fill="url(#shad)" filter="url(#bl)"/><ellipse cx="465.5" cy="490.6" rx="92" ry="42" fill="url(#glow)"/><ellipse cx="463.5" cy="523" rx="78" ry="6.6" fill="url(#shad)" filter="url(#bl)"/><g transform="translate(216.8,263.3)"><path d="M69.4,-29.4 q0,-1.6 1.8,-1.6 h5.4 q1.6,0 1.8,1.2 q0.2,-1.2 1.8,-1.2 h5.6 q1.8,0 1.8,1.8 V-18 L90,-14 L93,-10.6 L98,-8.6 L101,-5.6 L107,-4.6 L113.6,0.5 H69.4Z" fill="#8b4a42"/><path d="M78.4,-29.8 V-6 H69.4 V-29.4 q0,-1.6 1.8,-1.6 h5.4 q1.6,0 1.8,1.2Z" fill="#9a584e"/><polygon points="40,0.5 43.4,-19.6 46.7,-26.2 57.8,-45.8 66.6,-28.4 75.4,-13 80,0.5" fill="#6a9db0"/><polygon points="57.8,-45.8 66.6,-28.4 75.4,-13 80,0.5 57.8,0.5" fill="#4f8497"/><polygon points="57.8,-45.8 48.4,-29.2 51.6,-30.4 54.4,-26.6 57.8,-31 61,-27 63.6,-30.4 67,-27.6 66.6,-28.4" fill="#fff"/><polygon points="57.8,-45.8 57.8,-31 61,-27 63.6,-30.4 67,-27.6 66.6,-28.4" fill="#e4eef2"/><polygon points="10,0.5 35.3,-26.8 57,0.5" fill="#a6794b"/><polygon points="35.3,-26.8 57,0.5 35.3,0.5" fill="#8c6239"/><polygon points="5.5,0.5 19.7,-15.2 34.5,0.5" fill="#c99b6c"/><polygon points="19.7,-15.2 34.5,0.5 19.7,0.5" fill="#b48455"/><path d="M65.6,0.5 L78.2,-13 Q81.4,-16.4 84.8,-13 L103.6,0.5Z" fill="#23856c"/><path d="M81.4,-15.2 Q83.2,-14.8 84.8,-13 L103.6,0.5 H81.4Z" fill="#1c6f5b"/><path d="M49,0.5 l1.4,-4 l1.2,4 l1.6,-6 l1.6,6 l1.8,-11.6 l2,11.6 l1.4,-7 l1.6,7 l1.4,-5 l1.4,5 l1.4,-4 l1.2,4 l1.2,-3 l1,3Z" fill="#6cc24a"/><path d="M82.6,-14 l1,-3.4 l1,3.4Z M89.4,-7.4 l0.8,-2.6 l0.8,2.6Z M68.4,-8.6 l0.8,-2.6 l0.8,2.6Z" fill="#4db848"/><polygon points="36.7,0.5 42.5,-9.7 48.3,0.5" fill="#8c8390"/><polygon points="42.5,-9.7 48.3,0.5 42.5,0.5" fill="#6d6672"/><path d="M42.5,-9.7 v-2.6 l2,0.9 l-2,0.9" fill="#d8433c"/><path d="M42.5,-5 L40.6,0.5 H44.4Z" fill="#4a4450"/><path d="M14.6,0.5 C14.8,-2 14.4,-4 13.8,-6" stroke="#8a6238" stroke-width="0.9" fill="none"/><path d="M14,-6.4 C11.6,-9 9,-8.2 8.2,-6.6 C10.4,-7.2 12.2,-6.6 13.8,-5.8 C11.4,-6 10,-4.8 9.8,-3.4 C11.4,-4.6 12.8,-5 14.2,-5 C16,-5.2 17.6,-4.4 18.4,-3 C18.2,-4.8 16.8,-5.8 15,-6 C16.8,-6.8 18.4,-6.6 19.2,-5.6 C18.6,-7.6 16,-8.2 14,-6.4Z" fill="#3dae49"/><path d="M21.6,-2.2 h6" stroke="#e6c9a0" stroke-width="0.8" opacity="0.8"/><ellipse cx="40.6" cy="-34.14" rx="4.35" ry="1.89" fill="#fff"/><circle cx="39.73" cy="-35.59" r="2.17" fill="#fff"/><circle cx="42.05" cy="-35.15" r="1.59" fill="#fff"/><ellipse cx="23.6" cy="-25.1" rx="3" ry="1.3" fill="#fff"/><circle cx="23" cy="-26.1" r="1.5" fill="#fff"/><circle cx="24.6" cy="-25.8" r="1.1" fill="#fff"/><ellipse cx="94.4" cy="-19.8" rx="3.75" ry="1.62" fill="#fff"/><circle cx="93.65" cy="-21.05" r="1.88" fill="#fff"/><circle cx="95.65" cy="-20.68" r="1.38" fill="#fff"/><ellipse cx="84" cy="-35.2" rx="2.25" ry="0.98" fill="#fff"/><circle cx="83.55" cy="-35.95" r="1.12" fill="#fff"/><circle cx="84.75" cy="-35.72" r="0.83" fill="#fff"/><path d="M75.4,-31.6 C73,-34.6 73.4,-37.2 75.4,-37.2 C77.4,-37.2 77.8,-34.6 75.4,-31.6Z" fill="#e8433c"/><circle cx="75.4" cy="-35.4" r="0.9" fill="#fff"/><polygon points="3.4,6.5 4.6,12 6.4,16.2 9,15.4 11,22 14,27.6 16.5,26.4 18.5,32 20.8,37.4 23.5,34.5 27,43 31.4,51 34.5,44 38,42.4 41,45.4 43.5,48 46.5,45.8 49.5,54.8 53,49.4 56,54.4 59.3,60 62,57.4 64,65 66.2,73.6 68.5,63 70.4,54.6 73,53.4 75.5,50.4 79.8,54 82.5,46.8 85,46 87.3,47.3 90,43 92,38.4 95.6,39.7 99,33.4 103.2,34.7 106,29 108,24.4 110,23.4 112.6,22.3 114.5,16 116,11 117,6.5" fill="#4a3220" stroke="#4a3220" stroke-width="0.7" stroke-linejoin="round"/><g clip-path="url(#rkc)"><polygon points="22,27 41,38 37,52 25,52" fill="#271c18"/><polygon points="43,40 57,43 55,56 44,56" fill="#271c18"/><polygon points="59,50 73,48 71,76 61,76" fill="#271c18"/><polygon points="74.6,27 84,39 85,56 74.6,56" fill="#271c18"/><polygon points="89,31 102,27 101,42 90,42" fill="#271c18"/><polygon points="17.6,13 25,28 18,29" fill="#271c18"/><polygon points="59.8,19 64,40 56,35" fill="#271c18"/><polygon points="100.8,12 106.4,27 98.6,26" fill="#271c18"/><polygon points="105,24 112,22 110,32 104,34" fill="#271c18"/><polygon points="9,20 14,20 13,30 10,28" fill="#271c18"/><path d="M13,6.5L20.22,35.27Q20.8,37.6 21.41,35.28L29,6.5Z" fill="#543923"/><path d="M33,6.5L42.87,45.72Q43.5,48.2 44.07,45.7L53,6.5Z" fill="#583c24"/><path d="M47,6.5L58.66,57.39Q59.3,60.2 59.91,57.39L71,6.5Z" fill="#5f4128"/><path d="M62,6.5L71.02,50.78Q71.6,53.6 72.22,50.79L82,6.5Z" fill="#65462a"/><path d="M94,6.5L102.46,32.72Q103.2,35 103.98,32.73L113,6.5Z" fill="#543923"/><polygon points="17.8,13 22.8,26 18.8,26" fill="#271c18"/><polygon points="60.1,19 62.6,35 57.6,33" fill="#271c18"/><polygon points="101.4,12 104.8,25 100.2,24" fill="#271c18"/><polygon points="50.4,30 53,44 48.6,43" fill="#271c18"/><polygon points="79,30 81.6,48 77,46" fill="#271c18"/><path d="M5,6.5L12.88,25.15Q14,27.8 15.12,25.15L23,6.5Z" fill="#74512e"/><polygon points="14,6.5 21,6.5 14.6,25" fill="#5c3f26"/><path d="M26,6.5L34.45,37.62Q35.2,40.4 36.22,37.71L48,6.5Z" fill="#74512e"/><polygon points="35.2,6.5 48,6.5 36,38" fill="#664628"/><path d="M71,6.5L86.12,44.63Q87.3,47.6 88.5,44.64L104,6.5Z" fill="#74512e"/><polygon points="71,6.5 87.3,6.5 86.6,45" fill="#846037"/><path d="M107,6.5L111.97,20.79Q112.6,22.6 113.21,20.78L118,6.5Z" fill="#765330"/><path d="M42,6.5L52.68,27.24Q54,29.8 55.04,27.11L63,6.5Z" fill="#8a663f"/><path d="M2.6,6.5L5.81,14.81Q6.5,16.6 7.37,14.89L11.6,6.5Z" fill="#a5825d"/><path d="M18.6,6.5L26.34,24.66Q27.6,27.6 28.83,24.65L36.4,6.5Z" fill="#a07b53"/><polygon points="27.6,6.5 36.4,6.5 28.4,25.6" fill="#8c6842"/><path d="M58.6,6.5L67.47,20.31Q69.2,23 70.83,20.25L79,6.5Z" fill="#a07b53"/><polygon points="69.2,6.5 79,6.5 70,21" fill="#8c6842"/><path d="M99.4,6.5L105.69,17Q107,19.2 108.15,16.91L113.4,6.5Z" fill="#a07b53"/></g><line x1="36.7" y1="43" x2="36.7" y2="53.7" stroke="#66605c" stroke-width="0.9"/><line x1="45.7" y1="50.6" x2="45.7" y2="59.7" stroke="#66605c" stroke-width="0.9"/><line x1="53.3" y1="52.9" x2="53.3" y2="57.4" stroke="#66605c" stroke-width="0.9"/><line x1="61.6" y1="61" x2="61.6" y2="66.5" stroke="#66605c" stroke-width="0.9"/><line x1="66.2" y1="70" x2="66.2" y2="75" stroke="#66605c" stroke-width="0.9"/><line x1="68.7" y1="66" x2="68.7" y2="71.8" stroke="#66605c" stroke-width="0.9"/><line x1="73.4" y1="55.2" x2="73.4" y2="65.8" stroke="#66605c" stroke-width="0.9"/><line x1="75.4" y1="52.9" x2="75.4" y2="58.2" stroke="#66605c" stroke-width="0.9"/><line x1="84.3" y1="48" x2="84.3" y2="52.9" stroke="#66605c" stroke-width="0.9"/><line x1="93.4" y1="40" x2="93.4" y2="44.6" stroke="#66605c" stroke-width="0.9"/><line x1="107" y1="30" x2="107" y2="33" stroke="#66605c" stroke-width="0.9"/><rect x="0" y="0" width="120" height="7.2" rx="0.8" fill="#6cb53c"/><rect x="0" y="0" width="120" height="3.6" rx="0.8" fill="#8ed04b"/><path d="M2,6.9 L3.5,10.2 L5,6.9ZM6,6.9 L7.2,8.8 L8.4,6.9ZM11,6.9 L12.8,11.6 L14.6,6.9ZM19,6.9 L20.3,9 L21.6,6.9ZM25,6.9 L26.6,10.8 L28.2,6.9ZM31,6.9 L32.2,8.8 L33.4,6.9ZM38,6.9 L39.7,11.4 L41.4,6.9ZM44,6.9 L45.4,9.2 L46.8,6.9ZM52,6.9 L53.5,10.4 L55,6.9ZM58,6.9 L59.2,8.8 L60.4,6.9ZM67,6.9 L68.8,11.8 L70.6,6.9ZM74,6.9 L75.3,9 L76.6,6.9ZM80,6.9 L81.6,10.6 L83.2,6.9ZM88,6.9 L89.2,8.8 L90.4,6.9ZM95,6.9 L96.7,11.2 L98.4,6.9ZM101,6.9 L102.4,9.2 L103.8,6.9ZM108,6.9 L109.5,10.4 L111,6.9ZM114,6.9 L115.3,9.6 L116.6,6.9Z" fill="#6cb53c"/></g><g transform="translate(402.9,263.3)"><path d="M63,-33 q0,-1.4 1.6,-1.4 h7 q1.4,0 1.6,1 q0.2,-1 1.6,-1 h7 q1.6,0 1.6,1.6 V-20 L86,-15 L89,-10 L94,-8 L98,-5 L104,-4 L109,0.5 H63Z" fill="#8b4a42"/><path d="M73.4,-33.6 V0 H63 V-33Z" fill="#9c5a50"/><path d="M33,-20 q0,-1.4 1.4,-1.4 h9.6 q1.4,0 1.4,1.4 V0.5 H33Z" fill="#8e6238"/><path d="M33,-20 q0,-1.4 1.4,-1.4 h4 V0.5 H33Z" fill="#a87a4b"/><polygon points="30.5,0.5 56,-23.8 83,0.5" fill="#6a9db0"/><polygon points="56,-23.8 83,0.5 56,0.5" fill="#4f8497"/><polygon points="56,-23.8 49,-17 52,-18.4 54,-15.4 56.4,-18.6 58.6,-15.6 60.4,-18.2 63.6,-17" fill="#f2f2f2"/><polygon points="56,-24.6 51.6,-20 54,-20.6 56.2,-17.6 58.2,-20.6 60.8,-19.8" fill="#f28b30"/><circle cx="56.4" cy="-29" r="3.6" fill="#fff"/><circle cx="53.6" cy="-27.4" r="2.6" fill="#fff"/><circle cx="59.4" cy="-27" r="2.8" fill="#fff"/><circle cx="56.4" cy="-32" r="2.6" fill="#f6f6f6"/><polygon points="80,0.5 89,-9.4 99,0.5" fill="#2f9273"/><polygon points="89,-9.4 99,0.5 89,0.5" fill="#257a60"/><path d="M99,0.5 l1.4,-3 l1.2,3 l1.4,-5.6 l1.6,5.6 l1.4,-3.4 l1.6,3.4Z" fill="#3faa4a"/><path d="M10,0.5 C18,0 24.6,-3 25.6,-9 C26,-12.6 22.6,-15 19,-14 C17.6,-13.4 16,-13.6 15,-14.6 C19,-21.4 31,-20 32.4,-10 C33,-5 32,-2 30.4,0.5Z" fill="#3aa3dc"/><path d="M15,-14.6 C19,-21.4 31,-20 32.4,-10 C30,-16 23,-18.6 15,-14.6Z" fill="#8fd3f2"/><ellipse cx="18.6" cy="-1.6" rx="6.4" ry="1.3" fill="#f28b30" transform="rotate(-12 18.6 -1.6)"/><path d="M16.8,-9.6 l1.8,3 l-0.6,4" stroke="#e88ca0" stroke-width="1.3" fill="none"/><circle cx="16.6" cy="-10.6" r="1.1" fill="#5a3a30"/><g transform="translate(41.5,-53.4)"><path d="M0,-14.4 C17.68,-14.4 18.36,3.6 2.99,15.12 L-2.99,15.12 C-18.36,3.6 -17.68,-14.4 0,-14.4Z" fill="#e9456b"/><path d="M0,-14.4 C14.5,-14.4 15.06,3.6 2.45,15.12 L-2.45,15.12 C-15.06,3.6 -14.5,-14.4 0,-14.4Z" fill="#f6d73c"/><path d="M0,-14.4 C10.61,-14.4 11.02,3.6 1.8,15.12 L-1.8,15.12 C-11.02,3.6 -10.61,-14.4 0,-14.4Z" fill="#3aa3dc"/><path d="M0,-14.4 C7.07,-14.4 7.34,3.6 1.2,15.12 L-1.2,15.12 C-7.34,3.6 -7.07,-14.4 0,-14.4Z" fill="#f08a2e"/><path d="M0,-14.4 C3.18,-14.4 3.3,3.6 0.54,15.12 L-0.54,15.12 C-3.3,3.6 -3.18,-14.4 0,-14.4Z" fill="#f6d73c"/><path d="M-2.72,15.12 L-1,23.04 M2.72,15.12 L1,23.04" stroke="#8a6a4a" stroke-width="0.4"/><rect x="-1.3" y="23.04" width="2.6" height="2.2" fill="#b5532e"/></g><path d="M89.6,-39.6 L100.2,-26 M111.4,-39.6 L100.6,-26 M94.6,-39 L100.3,-26 M100.4,-39 V-26 M106.2,-39 L100.5,-26" stroke="#f2f2f2" stroke-width="0.45" fill="none" opacity="0.9"/><path d="M90,-39.6 L100.4,-26 L111,-39.6Z" fill="#fff" opacity="0.18"/><path d="M89,-39 C88.6,-48.8 112.4,-48.8 112,-39 C110.6,-40.8 108.4,-40.8 107,-39.4 C105.4,-41 102.4,-41 100.6,-39.4 C98.8,-41 95.8,-41 94.2,-39.4 C92.8,-40.8 90.6,-40.8 89,-39Z" fill="#d8232e"/><path d="M95,-44.6 C98,-46.2 103,-46.2 106,-44.6" stroke="#ef5a5a" stroke-width="0.8" fill="none"/><rect x="99.5" y="-27.4" width="1.9" height="4.6" rx="0.6" fill="#5e5256"/><circle cx="100.4" cy="-28" r="0.9" fill="#caa48a"/><rect x="66.6" y="-41.4" width="2.6" height="6.8" fill="#4a4450"/><circle cx="67.8" cy="-42.6" r="1.5" fill="#5e5560"/><rect x="62.4" y="-42.2" width="4.6" height="1.6" fill="#3a3a40"/><ellipse cx="28.7" cy="-27.62" rx="3.3" ry="1.43" fill="#fff"/><circle cx="28.04" cy="-28.72" r="1.65" fill="#fff"/><circle cx="29.8" cy="-28.39" r="1.21" fill="#fff"/><ellipse cx="52.4" cy="-36.28" rx="2.7" ry="1.17" fill="#fff"/><circle cx="51.86" cy="-37.18" r="1.35" fill="#fff"/><circle cx="53.3" cy="-36.91" r="0.99" fill="#fff"/><ellipse cx="79.5" cy="-44.32" rx="1.8" ry="0.78" fill="#fff"/><circle cx="79.14" cy="-44.92" r="0.9" fill="#fff"/><circle cx="80.1" cy="-44.74" r="0.66" fill="#fff"/><ellipse cx="89.9" cy="-24.08" rx="2.7" ry="1.17" fill="#fff"/><circle cx="89.36" cy="-24.98" r="1.35" fill="#fff"/><circle cx="90.8" cy="-24.71" r="0.99" fill="#fff"/><path d="M93.9,-9.6 C91.5,-12.6 91.9,-15.2 93.9,-15.2 C95.9,-15.2 96.3,-12.6 93.9,-9.6Z" fill="#e8433c"/><circle cx="93.9" cy="-13.4" r="0.9" fill="#fff"/><polygon points="3.4,6.5 4.6,12 6.4,16.2 9,15.4 11,22 14,27.6 16.5,26.4 18.5,32 20.8,37.4 23.5,34.5 27,43 31.4,51 34.5,44 38,42.4 41,45.4 43.5,48 46.5,45.8 49.5,54.8 53,49.4 56,54.4 59.3,60 62,57.4 64,65 66.2,73.6 68.5,63 70.4,54.6 73,53.4 75.5,50.4 79.8,54 82.5,46.8 85,46 87.3,47.3 90,43 92,38.4 95.6,39.7 99,33.4 103.2,34.7 106,29 108,24.4 110,23.4 112.6,22.3 114.5,16 116,11 117,6.5" fill="#4a3220" stroke="#4a3220" stroke-width="0.7" stroke-linejoin="round"/><g clip-path="url(#rkc)"><polygon points="22,27 41,38 37,52 25,52" fill="#271c18"/><polygon points="43,40 57,43 55,56 44,56" fill="#271c18"/><polygon points="59,50 73,48 71,76 61,76" fill="#271c18"/><polygon points="74.6,27 84,39 85,56 74.6,56" fill="#271c18"/><polygon points="89,31 102,27 101,42 90,42" fill="#271c18"/><polygon points="17.6,13 25,28 18,29" fill="#271c18"/><polygon points="59.8,19 64,40 56,35" fill="#271c18"/><polygon points="100.8,12 106.4,27 98.6,26" fill="#271c18"/><polygon points="105,24 112,22 110,32 104,34" fill="#271c18"/><polygon points="9,20 14,20 13,30 10,28" fill="#271c18"/><path d="M13,6.5L20.22,35.27Q20.8,37.6 21.41,35.28L29,6.5Z" fill="#543923"/><path d="M33,6.5L42.87,45.72Q43.5,48.2 44.07,45.7L53,6.5Z" fill="#583c24"/><path d="M47,6.5L58.66,57.39Q59.3,60.2 59.91,57.39L71,6.5Z" fill="#5f4128"/><path d="M62,6.5L71.02,50.78Q71.6,53.6 72.22,50.79L82,6.5Z" fill="#65462a"/><path d="M94,6.5L102.46,32.72Q103.2,35 103.98,32.73L113,6.5Z" fill="#543923"/><polygon points="17.8,13 22.8,26 18.8,26" fill="#271c18"/><polygon points="60.1,19 62.6,35 57.6,33" fill="#271c18"/><polygon points="101.4,12 104.8,25 100.2,24" fill="#271c18"/><polygon points="50.4,30 53,44 48.6,43" fill="#271c18"/><polygon points="79,30 81.6,48 77,46" fill="#271c18"/><path d="M5,6.5L12.88,25.15Q14,27.8 15.12,25.15L23,6.5Z" fill="#74512e"/><polygon points="14,6.5 21,6.5 14.6,25" fill="#5c3f26"/><path d="M26,6.5L34.45,37.62Q35.2,40.4 36.22,37.71L48,6.5Z" fill="#74512e"/><polygon points="35.2,6.5 48,6.5 36,38" fill="#664628"/><path d="M71,6.5L86.12,44.63Q87.3,47.6 88.5,44.64L104,6.5Z" fill="#74512e"/><polygon points="71,6.5 87.3,6.5 86.6,45" fill="#846037"/><path d="M107,6.5L111.97,20.79Q112.6,22.6 113.21,20.78L118,6.5Z" fill="#765330"/><path d="M42,6.5L52.68,27.24Q54,29.8 55.04,27.11L63,6.5Z" fill="#8a663f"/><path d="M2.6,6.5L5.81,14.81Q6.5,16.6 7.37,14.89L11.6,6.5Z" fill="#a5825d"/><path d="M18.6,6.5L26.34,24.66Q27.6,27.6 28.83,24.65L36.4,6.5Z" fill="#a07b53"/><polygon points="27.6,6.5 36.4,6.5 28.4,25.6" fill="#8c6842"/><path d="M58.6,6.5L67.47,20.31Q69.2,23 70.83,20.25L79,6.5Z" fill="#a07b53"/><polygon points="69.2,6.5 79,6.5 70,21" fill="#8c6842"/><path d="M99.4,6.5L105.69,17Q107,19.2 108.15,16.91L113.4,6.5Z" fill="#a07b53"/></g><line x1="36.7" y1="43" x2="36.7" y2="53.7" stroke="#66605c" stroke-width="0.9"/><line x1="45.7" y1="50.6" x2="45.7" y2="59.7" stroke="#66605c" stroke-width="0.9"/><line x1="53.3" y1="52.9" x2="53.3" y2="57.4" stroke="#66605c" stroke-width="0.9"/><line x1="61.6" y1="61" x2="61.6" y2="66.5" stroke="#66605c" stroke-width="0.9"/><line x1="66.2" y1="70" x2="66.2" y2="75" stroke="#66605c" stroke-width="0.9"/><line x1="68.7" y1="66" x2="68.7" y2="71.8" stroke="#66605c" stroke-width="0.9"/><line x1="73.4" y1="55.2" x2="73.4" y2="65.8" stroke="#66605c" stroke-width="0.9"/><line x1="75.4" y1="52.9" x2="75.4" y2="58.2" stroke="#66605c" stroke-width="0.9"/><line x1="84.3" y1="48" x2="84.3" y2="52.9" stroke="#66605c" stroke-width="0.9"/><line x1="93.4" y1="40" x2="93.4" y2="44.6" stroke="#66605c" stroke-width="0.9"/><line x1="107" y1="30" x2="107" y2="33" stroke="#66605c" stroke-width="0.9"/><rect x="0" y="0" width="120" height="7.2" rx="0.8" fill="#c67a74"/><rect x="0" y="0" width="120" height="3.6" rx="0.8" fill="#dc938b"/><path d="M2,6.9 L3.5,10.2 L5,6.9ZM6,6.9 L7.2,8.8 L8.4,6.9ZM11,6.9 L12.8,11.6 L14.6,6.9ZM19,6.9 L20.3,9 L21.6,6.9ZM25,6.9 L26.6,10.8 L28.2,6.9ZM31,6.9 L32.2,8.8 L33.4,6.9ZM38,6.9 L39.7,11.4 L41.4,6.9ZM44,6.9 L45.4,9.2 L46.8,6.9ZM52,6.9 L53.5,10.4 L55,6.9ZM58,6.9 L59.2,8.8 L60.4,6.9ZM67,6.9 L68.8,11.8 L70.6,6.9ZM74,6.9 L75.3,9 L76.6,6.9ZM80,6.9 L81.6,10.6 L83.2,6.9ZM88,6.9 L89.2,8.8 L90.4,6.9ZM95,6.9 L96.7,11.2 L98.4,6.9ZM101,6.9 L102.4,9.2 L103.8,6.9ZM108,6.9 L109.5,10.4 L111,6.9ZM114,6.9 L115.3,9.6 L116.6,6.9Z" fill="#c67a74"/></g><g transform="translate(214.9,450)"><g transform="translate(30.4,-26.2)"><circle r="14.8" fill="#e4eaea" stroke="#2a8473" stroke-width="1.6"/><circle r="14.8" fill="none" stroke="#1f6b5c" stroke-width="1.6" stroke-dasharray="1.2 1.4"/><circle r="12.4" fill="none" stroke="#3a9484" stroke-width="0.4"/><path d="M-14,0L14,0M-13.52,-3.62L13.52,3.62M-12.12,-7L12.12,7M-9.9,-9.9L9.9,9.9M-7,-12.12L7,12.12M-3.62,-13.52L3.62,13.52M0,-14L0,14M3.62,-13.52L-3.62,13.52M7,-12.12L-7,12.12M9.9,-9.9L-9.9,9.9M12.12,-7L-12.12,7M13.52,-3.62L-13.52,3.62" stroke="#7fb8ad" stroke-width="0.4"/><path d="M0,0 L-2.4,26 M0,0 L2.4,26" stroke="#2a8473" stroke-width="0.9"/><circle r="1.5" fill="#2a8473"/></g><path d="M57.6,-81 L57.9,-75.4 Q59.4,-75 59.2,-73 L58.6,-71.6 L59,-57 L59.9,-45.4 L61,-44.6 L61,-42.8 L60.6,-42.6 L62.2,-30.6 L63.2,-29.8 L63.2,-28 L62.9,-27.8 L64.4,-22 L66.6,-17 L61,-17 C60.6,-21.6 59.6,-24.4 57.6,-24.4 C55.6,-24.4 54.6,-21.6 54.2,-17 L48.6,-17 L50.8,-22 L52.3,-27.8 L52,-28 L52,-29.8 L53,-30.6 L54.6,-42.6 L54.2,-42.8 L54.2,-44.6 L55.3,-45.4 L56.2,-57 L56.6,-71.6 L56,-73 Q55.8,-75 57.3,-75.4Z" fill="#4a4a50"/><path d="M56.6,-42 L58.6,-31 M58.6,-42 L56.6,-31" stroke="#d1d2d4" stroke-width="0.35" opacity="0.6"/><polygon points="19,0.5 46.3,-33.2 73.6,0.5" fill="#b98a58"/><polygon points="46.3,-33.2 73.6,0.5 46.3,0.5" fill="#94693d"/><polygon points="34,-18 46.3,-33.2 58.6,-18 46.3,-20.6" fill="#c69a66" opacity="0.5"/><path d="M70.2,-67.6 L71,-60 L72.8,-56 L73.8,-54.4 H66.6 L67.6,-56 L69.4,-60Z" fill="#b5814a"/><rect x="64.8" y="-54.6" width="11.2" height="55.1" fill="#cb985f"/><rect x="70.4" y="-54.6" width="5.6" height="55.1" fill="#bd8a52"/><rect x="64.4" y="-55.4" width="12" height="1.6" fill="#b27d45"/><rect x="64.4" y="-37.8" width="12" height="1.2" fill="#a8733c"/><circle cx="70.3" cy="-44.6" r="3.2" fill="#fdfdfd"/><circle cx="70.3" cy="-44.6" r="3.2" fill="none" stroke="#9a6a3a" stroke-width="0.6"/><path d="M70.3,-46.6 V-44.6 L71.6,-43.8" stroke="#7a5a3a" stroke-width="0.4" fill="none"/><path d="M66.4,-35 V-2 M68.4,-35 V-2 M70.4,-35 V-2 M72.4,-35 V-2 M74.4,-35 V-2" stroke="#a8743c" stroke-width="0.5"/><path d="M64.8,-26 H76 M64.8,-14 H76" stroke="#b07c44" stroke-width="0.6"/><g transform="rotate(4.5 83.6 0)"><path d="M77.6,-40 Q77.6,-44 80,-44 H87.2 Q89.6,-44 89.6,-40 V0.5 H77.6Z" fill="#a09492"/><path d="M77.6,-37.4 H89.6 M77.6,-31 H89.6 M77.6,-24.6 H89.6 M77.6,-18.2 H89.6 M77.6,-11.8 H89.6 M77.6,-5.4 H89.6" stroke="#efebea" stroke-width="1.5"/><path d="M79,-40 V0 M80.8,-40 V0 M82.6,-40 V0 M84.4,-40 V0 M86.2,-40 V0 M88,-40 V0" stroke="#7a6e6c" stroke-width="0.5" opacity="0.8"/><rect x="85" y="-42" width="4.6" height="42.5" fill="#5d5250" opacity="0.3"/></g><path d="M91.4,-24 q0,-2.8 2.6,-2.8 h5.2 q2.6,0 2.6,2.8 V-8 L103.4,-5 V0.5 H89.6 V-5 L91.4,-8Z" fill="#7c5f4c"/><path d="M102.6,-16 q0,-2.4 2.2,-2.4 h3.6 q2.2,0 2.2,2.4 V-5 L111.6,-3 V0.5 H101.6 V-3 L102.6,-5Z" fill="#866853"/><path d="M93,-20.4 h7 M96.5,-19.6 v6.4 M94.2,-9.6 h4.6 M103.6,-13.4 h5 M106.1,-13 v5" stroke="#5a4234" stroke-width="0.8" fill="none"/><polygon points="8.6,0.5 26.4,-19.4 43.4,0.5" fill="#cf9f6e"/><polygon points="26.4,-19.4 43.4,0.5 26.4,0.5" fill="#b88757"/><rect x="47" y="-8.6" width="14.4" height="8.4" rx="0.8" fill="#e0242f"/><rect x="48" y="-7.5" width="12.4" height="1.8" fill="#f7d6d8"/><rect x="48" y="-4.3" width="12.4" height="1.6" fill="#f7d6d8"/><circle cx="50" cy="-0.1" r="1" fill="#222"/><circle cx="58.4" cy="-0.1" r="1" fill="#222"/><path d="M22,0.5 C22.2,-3 21.8,-5.6 21,-8" stroke="#8a6238" stroke-width="1.1" fill="none"/><path d="M21.2,-8.4 C18,-11.6 14.6,-10.6 13.6,-8.6 C16.4,-9.4 18.6,-8.6 20.8,-7.6 C17.6,-7.8 15.6,-6.2 15.4,-4.4 C17.4,-6 19.4,-6.6 21.2,-6.6 C23.6,-6.8 25.6,-5.8 26.6,-4 C26.4,-6.4 24.6,-7.8 22.4,-8 C24.6,-9 26.6,-8.8 27.8,-7.4 C27,-10 23.6,-10.8 21.2,-8.4Z" fill="#3dae49"/><path d="M36.6,-3.8 l1.2,3.8 h-2.4Z" fill="#e8c54a"/><path d="M27,-2.2 h6" stroke="#e6c9a0" stroke-width="0.8" opacity="0.8"/><ellipse cx="46.4" cy="-44" rx="3" ry="1.3" fill="#fff"/><circle cx="45.8" cy="-45" r="1.5" fill="#fff"/><circle cx="47.4" cy="-44.7" r="1.1" fill="#fff"/><ellipse cx="97.8" cy="-31.7" rx="3" ry="1.3" fill="#fff"/><circle cx="97.2" cy="-32.7" r="1.5" fill="#fff"/><circle cx="98.8" cy="-32.4" r="1.1" fill="#fff"/><ellipse cx="10" cy="-14.76" rx="2.4" ry="1.04" fill="#fff"/><circle cx="9.52" cy="-15.56" r="1.2" fill="#fff"/><circle cx="10.8" cy="-15.32" r="0.88" fill="#fff"/><polygon points="3.4,6.5 4.6,12 6.4,16.2 9,15.4 11,22 14,27.6 16.5,26.4 18.5,32 20.8,37.4 23.5,34.5 27,43 31.4,51 34.5,44 38,42.4 41,45.4 43.5,48 46.5,45.8 49.5,54.8 53,49.4 56,54.4 59.3,60 62,57.4 64,65 66.2,73.6 68.5,63 70.4,54.6 73,53.4 75.5,50.4 79.8,54 82.5,46.8 85,46 87.3,47.3 90,43 92,38.4 95.6,39.7 99,33.4 103.2,34.7 106,29 108,24.4 110,23.4 112.6,22.3 114.5,16 116,11 117,6.5" fill="#4a3220" stroke="#4a3220" stroke-width="0.7" stroke-linejoin="round"/><g clip-path="url(#rkc)"><polygon points="22,27 41,38 37,52 25,52" fill="#271c18"/><polygon points="43,40 57,43 55,56 44,56" fill="#271c18"/><polygon points="59,50 73,48 71,76 61,76" fill="#271c18"/><polygon points="74.6,27 84,39 85,56 74.6,56" fill="#271c18"/><polygon points="89,31 102,27 101,42 90,42" fill="#271c18"/><polygon points="17.6,13 25,28 18,29" fill="#271c18"/><polygon points="59.8,19 64,40 56,35" fill="#271c18"/><polygon points="100.8,12 106.4,27 98.6,26" fill="#271c18"/><polygon points="105,24 112,22 110,32 104,34" fill="#271c18"/><polygon points="9,20 14,20 13,30 10,28" fill="#271c18"/><path d="M13,6.5L20.22,35.27Q20.8,37.6 21.41,35.28L29,6.5Z" fill="#543923"/><path d="M33,6.5L42.87,45.72Q43.5,48.2 44.07,45.7L53,6.5Z" fill="#583c24"/><path d="M47,6.5L58.66,57.39Q59.3,60.2 59.91,57.39L71,6.5Z" fill="#5f4128"/><path d="M62,6.5L71.02,50.78Q71.6,53.6 72.22,50.79L82,6.5Z" fill="#65462a"/><path d="M94,6.5L102.46,32.72Q103.2,35 103.98,32.73L113,6.5Z" fill="#543923"/><polygon points="17.8,13 22.8,26 18.8,26" fill="#271c18"/><polygon points="60.1,19 62.6,35 57.6,33" fill="#271c18"/><polygon points="101.4,12 104.8,25 100.2,24" fill="#271c18"/><polygon points="50.4,30 53,44 48.6,43" fill="#271c18"/><polygon points="79,30 81.6,48 77,46" fill="#271c18"/><path d="M5,6.5L12.88,25.15Q14,27.8 15.12,25.15L23,6.5Z" fill="#74512e"/><polygon points="14,6.5 21,6.5 14.6,25" fill="#5c3f26"/><path d="M26,6.5L34.45,37.62Q35.2,40.4 36.22,37.71L48,6.5Z" fill="#74512e"/><polygon points="35.2,6.5 48,6.5 36,38" fill="#664628"/><path d="M71,6.5L86.12,44.63Q87.3,47.6 88.5,44.64L104,6.5Z" fill="#74512e"/><polygon points="71,6.5 87.3,6.5 86.6,45" fill="#846037"/><path d="M107,6.5L111.97,20.79Q112.6,22.6 113.21,20.78L118,6.5Z" fill="#765330"/><path d="M42,6.5L52.68,27.24Q54,29.8 55.04,27.11L63,6.5Z" fill="#8a663f"/><path d="M2.6,6.5L5.81,14.81Q6.5,16.6 7.37,14.89L11.6,6.5Z" fill="#a5825d"/><path d="M18.6,6.5L26.34,24.66Q27.6,27.6 28.83,24.65L36.4,6.5Z" fill="#a07b53"/><polygon points="27.6,6.5 36.4,6.5 28.4,25.6" fill="#8c6842"/><path d="M58.6,6.5L67.47,20.31Q69.2,23 70.83,20.25L79,6.5Z" fill="#a07b53"/><polygon points="69.2,6.5 79,6.5 70,21" fill="#8c6842"/><path d="M99.4,6.5L105.69,17Q107,19.2 108.15,16.91L113.4,6.5Z" fill="#a07b53"/></g><line x1="36.7" y1="43" x2="36.7" y2="53.7" stroke="#66605c" stroke-width="0.9"/><line x1="45.7" y1="50.6" x2="45.7" y2="59.7" stroke="#66605c" stroke-width="0.9"/><line x1="53.3" y1="52.9" x2="53.3" y2="57.4" stroke="#66605c" stroke-width="0.9"/><line x1="61.6" y1="61" x2="61.6" y2="66.5" stroke="#66605c" stroke-width="0.9"/><line x1="66.2" y1="70" x2="66.2" y2="75" stroke="#66605c" stroke-width="0.9"/><line x1="68.7" y1="66" x2="68.7" y2="71.8" stroke="#66605c" stroke-width="0.9"/><line x1="73.4" y1="55.2" x2="73.4" y2="65.8" stroke="#66605c" stroke-width="0.9"/><line x1="75.4" y1="52.9" x2="75.4" y2="58.2" stroke="#66605c" stroke-width="0.9"/><line x1="84.3" y1="48" x2="84.3" y2="52.9" stroke="#66605c" stroke-width="0.9"/><line x1="93.4" y1="40" x2="93.4" y2="44.6" stroke="#66605c" stroke-width="0.9"/><line x1="107" y1="30" x2="107" y2="33" stroke="#66605c" stroke-width="0.9"/><rect x="0" y="0" width="120" height="6.4" rx="0.8" fill="#232326"/><rect x="0" y="0" width="120" height="3.2" rx="0.8" fill="#2c2c2f"/><path d="M2,6.1 L3.5,9.4 L5,6.1ZM6,6.1 L7.2,8 L8.4,6.1ZM11,6.1 L12.8,10.8 L14.6,6.1ZM19,6.1 L20.3,8.2 L21.6,6.1ZM25,6.1 L26.6,10 L28.2,6.1ZM31,6.1 L32.2,8 L33.4,6.1ZM38,6.1 L39.7,10.6 L41.4,6.1ZM44,6.1 L45.4,8.4 L46.8,6.1ZM52,6.1 L53.5,9.6 L55,6.1ZM58,6.1 L59.2,8 L60.4,6.1ZM67,6.1 L68.8,11 L70.6,6.1ZM74,6.1 L75.3,8.2 L76.6,6.1ZM80,6.1 L81.6,9.8 L83.2,6.1ZM88,6.1 L89.2,8 L90.4,6.1ZM95,6.1 L96.7,10.4 L98.4,6.1ZM101,6.1 L102.4,8.4 L103.8,6.1ZM108,6.1 L109.5,9.6 L111,6.1ZM114,6.1 L115.3,8.8 L116.6,6.1Z" fill="#1c1c1e"/></g><g transform="translate(402.5,448.6)"><g transform="translate(0,1.6)"><polygon points="3.4,6.5 4.6,12 6.4,16.2 9,15.4 11,22 14,27.6 16.5,26.4 18.5,32 20.8,37.4 23.5,34.5 27,43 31.4,51 34.5,44 38,42.4 41,45.4 43.5,48 46.5,45.8 49.5,54.8 53,49.4 56,54.4 59.3,60 62,57.4 64,65 66.2,73.6 68.5,63 70.4,54.6 73,53.4 75.5,50.4 79.8,54 82.5,46.8 85,46 87.3,47.3 90,43 92,38.4 95.6,39.7 99,33.4 103.2,34.7 106,29 108,24.4 110,23.4 112.6,22.3 114.5,16 116,11 117,6.5" fill="#4a3220" stroke="#4a3220" stroke-width="0.7" stroke-linejoin="round"/><g clip-path="url(#rkc)"><polygon points="22,27 41,38 37,52 25,52" fill="#271c18"/><polygon points="43,40 57,43 55,56 44,56" fill="#271c18"/><polygon points="59,50 73,48 71,76 61,76" fill="#271c18"/><polygon points="74.6,27 84,39 85,56 74.6,56" fill="#271c18"/><polygon points="89,31 102,27 101,42 90,42" fill="#271c18"/><polygon points="17.6,13 25,28 18,29" fill="#271c18"/><polygon points="59.8,19 64,40 56,35" fill="#271c18"/><polygon points="100.8,12 106.4,27 98.6,26" fill="#271c18"/><polygon points="105,24 112,22 110,32 104,34" fill="#271c18"/><polygon points="9,20 14,20 13,30 10,28" fill="#271c18"/><path d="M13,6.5L20.22,35.27Q20.8,37.6 21.41,35.28L29,6.5Z" fill="#543923"/><path d="M33,6.5L42.87,45.72Q43.5,48.2 44.07,45.7L53,6.5Z" fill="#583c24"/><path d="M47,6.5L58.66,57.39Q59.3,60.2 59.91,57.39L71,6.5Z" fill="#5f4128"/><path d="M62,6.5L71.02,50.78Q71.6,53.6 72.22,50.79L82,6.5Z" fill="#65462a"/><path d="M94,6.5L102.46,32.72Q103.2,35 103.98,32.73L113,6.5Z" fill="#543923"/><polygon points="17.8,13 22.8,26 18.8,26" fill="#271c18"/><polygon points="60.1,19 62.6,35 57.6,33" fill="#271c18"/><polygon points="101.4,12 104.8,25 100.2,24" fill="#271c18"/><polygon points="50.4,30 53,44 48.6,43" fill="#271c18"/><polygon points="79,30 81.6,48 77,46" fill="#271c18"/><path d="M5,6.5L12.88,25.15Q14,27.8 15.12,25.15L23,6.5Z" fill="#74512e"/><polygon points="14,6.5 21,6.5 14.6,25" fill="#5c3f26"/><path d="M26,6.5L34.45,37.62Q35.2,40.4 36.22,37.71L48,6.5Z" fill="#74512e"/><polygon points="35.2,6.5 48,6.5 36,38" fill="#664628"/><path d="M71,6.5L86.12,44.63Q87.3,47.6 88.5,44.64L104,6.5Z" fill="#74512e"/><polygon points="71,6.5 87.3,6.5 86.6,45" fill="#846037"/><path d="M107,6.5L111.97,20.79Q112.6,22.6 113.21,20.78L118,6.5Z" fill="#765330"/><path d="M42,6.5L52.68,27.24Q54,29.8 55.04,27.11L63,6.5Z" fill="#8a663f"/><path d="M2.6,6.5L5.81,14.81Q6.5,16.6 7.37,14.89L11.6,6.5Z" fill="#a5825d"/><path d="M18.6,6.5L26.34,24.66Q27.6,27.6 28.83,24.65L36.4,6.5Z" fill="#a07b53"/><polygon points="27.6,6.5 36.4,6.5 28.4,25.6" fill="#8c6842"/><path d="M58.6,6.5L67.47,20.31Q69.2,23 70.83,20.25L79,6.5Z" fill="#a07b53"/><polygon points="69.2,6.5 79,6.5 70,21" fill="#8c6842"/><path d="M99.4,6.5L105.69,17Q107,19.2 108.15,16.91L113.4,6.5Z" fill="#a07b53"/></g><line x1="36.7" y1="43" x2="36.7" y2="53.7" stroke="#66605c" stroke-width="0.9"/><line x1="45.7" y1="50.6" x2="45.7" y2="59.7" stroke="#66605c" stroke-width="0.9"/><line x1="53.3" y1="52.9" x2="53.3" y2="57.4" stroke="#66605c" stroke-width="0.9"/><line x1="61.6" y1="61" x2="61.6" y2="66.5" stroke="#66605c" stroke-width="0.9"/><line x1="66.2" y1="70" x2="66.2" y2="75" stroke="#66605c" stroke-width="0.9"/><line x1="68.7" y1="66" x2="68.7" y2="71.8" stroke="#66605c" stroke-width="0.9"/><line x1="73.4" y1="55.2" x2="73.4" y2="65.8" stroke="#66605c" stroke-width="0.9"/><line x1="75.4" y1="52.9" x2="75.4" y2="58.2" stroke="#66605c" stroke-width="0.9"/><line x1="84.3" y1="48" x2="84.3" y2="52.9" stroke="#66605c" stroke-width="0.9"/><line x1="93.4" y1="40" x2="93.4" y2="44.6" stroke="#66605c" stroke-width="0.9"/><line x1="107" y1="30" x2="107" y2="33" stroke="#66605c" stroke-width="0.9"/></g><path d="M0.4,-4.6 H119.6 Q120.2,2 118.6,8 L116,6.6 L113,10 L109,7 L104,8.4 L100,6.4 L95,9.6 L90,7 L84,10.4 L78,7.6 L72,9 L66,8 L60,11.6 L54,8.4 L48,9.6 L42,7.4 L36,10.6 L30,8 L24,9.6 L18,7 L12,10.6 L7,8 L2.6,9.6 Q-0.4,2 0.4,-4.6Z" fill="#f8f0c2"/><path d="M0.4,-2 Q0,3 2.6,9.6 L7,8 L12,10.6 L18,7 L24,9.6 L30,8 L36,10.6 L42,7.4 L48,9.6 L54,8.4 L60,11.6 L66,8 L72,9 L78,7.6 L84,10.4 L90,7 L95,9.6 L100,6.4 L104,8.4 L109,7 L113,10 L116,6.6 L118.6,8 Q120,3 119.6,-2 Q60,6 0.4,-2Z" fill="#ecdf9c" opacity="0.5"/><path d="M3,-7.4 H116.6 Q118.6,-5 117,-2.6 C110,-3.6 104,-1.6 101,0.6 C100.6,3 100,5.6 98.8,6.6 C97.6,5 97.2,2.6 96.4,0.4 C86,-3.6 70,-1.6 60,-1 C48,-0.4 34,-3.4 26,-1 C22,0.4 20,2.6 19.6,5.6 C19,8 18,9.6 17,10.4 C15.6,8 15.4,4 14,2.6 C10,0.6 6,-0.6 2.6,-2.6 Q1,-5 3,-7.4Z" fill="#43abe3"/><path d="M3,-7.4 H116.6 Q118,-6 117.6,-4.6 C90,-6 60,-5.6 40,-4 C26,-3 12,-4 2.2,-4.6 Q1.8,-6 3,-7.4Z" fill="#7fcdf2"/><ellipse cx="70" cy="-8.4" rx="13" ry="1.3" fill="#4db848"/><path d="M68,-9 C68.4,-15 66.6,-22 63.4,-28.4 L65.6,-29.2 C69,-23 71,-16 71.6,-9Z" fill="#8b5a34"/><path d="M69.6,-9 C70.6,-14 72.4,-18 75.4,-21.6 L76.8,-20.6 C74.4,-17 73,-13 72.4,-9Z" fill="#7a4c2a"/><path d="M64.6,-29 C60,-36 53,-36.4 50.6,-33 C55,-34.4 59,-32.4 62.6,-28.6 C58,-31 53.6,-29.4 52.4,-24.6 C56,-28 60.4,-28.4 64.6,-27 C68.6,-30 73,-29 75.6,-25.6 C74.6,-30 71,-32.4 67,-31 C70,-35.6 75,-37.6 79.6,-36 C75.6,-41 67,-39.6 64.6,-29Z" fill="#3dae49"/><path d="M64.8,-30.6 C64.6,-36 68.6,-41 74.6,-41.4 C70.4,-39 68,-35 66.6,-29.6Z" fill="#2f9a3e"/><path d="M63.6,-29.6 C60.6,-33.6 56,-35.6 51.6,-34.2 C56,-35.6 61,-33.6 64.6,-29Z" fill="#58c460"/><path d="M75.6,-21.8 C72.6,-25.6 68.6,-25.4 67,-23.2 C70.4,-23.8 73,-22.6 75,-20.4 C77.6,-23.8 82.6,-23.8 84.6,-21 C81.6,-21.8 78.6,-21.2 76.2,-19.6 C79.4,-20 82,-18.6 83,-16 C80.4,-18 77.8,-18.8 75.4,-18.8Z" fill="#3dae49"/><circle cx="46.4" cy="-26.2" r="3.9" fill="#f9e04a"/><g transform="translate(94.3,-41.4)"><path d="M0,-9.6 C11.44,-9.6 11.88,2.4 1.94,10.08 L-1.94,10.08 C-11.88,2.4 -11.44,-9.6 0,-9.6Z" fill="#e9456b"/><path d="M0,-9.6 C9.38,-9.6 9.74,2.4 1.59,10.08 L-1.59,10.08 C-9.74,2.4 -9.38,-9.6 0,-9.6Z" fill="#f6d73c"/><path d="M0,-9.6 C6.86,-9.6 7.13,2.4 1.16,10.08 L-1.16,10.08 C-7.13,2.4 -6.86,-9.6 0,-9.6Z" fill="#3aa3dc"/><path d="M0,-9.6 C4.58,-9.6 4.75,2.4 0.77,10.08 L-0.77,10.08 C-4.75,2.4 -4.58,-9.6 0,-9.6Z" fill="#f08a2e"/><path d="M0,-9.6 C2.06,-9.6 2.14,2.4 0.35,10.08 L-0.35,10.08 C-2.14,2.4 -2.06,-9.6 0,-9.6Z" fill="#f6d73c"/><path d="M-1.76,10.08 L-1,15.36 M1.76,10.08 L1,15.36" stroke="#8a6a4a" stroke-width="0.4"/><rect x="-1.3" y="15.36" width="2.6" height="2.2" fill="#b5532e"/></g><path d="M19.4,-14.4 H46.6 L44.6,-8.4 H21.6Z" fill="#fff"/><path d="M20,-12.6 H46 L45.4,-11 H20.6Z" fill="#e66a7a"/><rect x="23.6" y="-17.4" width="17.4" height="3.2" fill="#f4f4f6"/><rect x="26.4" y="-19.8" width="11" height="2.6" fill="#fff"/><rect x="29.4" y="-21.8" width="4.6" height="2.2" fill="#e0383e"/><path d="M24.6,-16 H40" stroke="#5a7aa8" stroke-width="0.7" stroke-dasharray="1 0.8"/><path d="M51.4,-15 C52.6,-19.6 60.6,-19.6 61.8,-15Z" fill="#e84a5a"/><path d="M54.4,-15 C55,-18.4 58.4,-18.4 58.8,-15Z" fill="#f6d73c"/><path d="M56.6,-15 V-8.6" stroke="#8a6a4a" stroke-width="0.5"/><circle cx="57.8" cy="-0.6" r="3.9" fill="#f4f4f4"/><path d="M57.8,-4.5 A3.9,3.9 0 0 1 61.7,-0.6 L57.8,-0.6Z" fill="#e8433c"/><path d="M57.8,3.3 A3.9,3.9 0 0 1 53.9,-0.6 L57.8,-0.6Z" fill="#3aa3dc"/><path d="M53.9,-0.6 A3.9,3.9 0 0 1 57.8,-4.5 L57.8,-0.6Z" fill="#f6d73c"/><ellipse cx="70.6" cy="-4.2" rx="1.7" ry="3" fill="#f2c81e" transform="rotate(-12 70.6 -4.2)"/><ellipse cx="74.6" cy="-4.2" rx="1.7" ry="3" fill="#f2c81e" transform="rotate(12 74.6 -4.2)"/><path d="M70,-5.6 l0.6,1.8 l0.8,-1.8 M74,-5.6 l0.6,1.8 l0.8,-1.8" stroke="#2a7a4a" stroke-width="0.5" fill="none"/><path d="M86,-13.6 L85.6,-9 H82.4Z M86.6,-15 L89.6,-9 H86.6Z" fill="#f0923a"/><path d="M81.4,-8.6 H90.6 L89.4,-7 H82.6Z" fill="#9a5a2e"/><ellipse cx="35.8" cy="-26.4" rx="3" ry="1.3" fill="#fff"/><circle cx="35.2" cy="-27.4" r="1.5" fill="#fff"/><circle cx="36.8" cy="-27.1" r="1.1" fill="#fff"/><ellipse cx="60.7" cy="-39.24" rx="2.1" ry="0.91" fill="#fff"/><circle cx="60.28" cy="-39.94" r="1.05" fill="#fff"/><circle cx="61.4" cy="-39.73" r="0.77" fill="#fff"/><ellipse cx="84.3" cy="-29.04" rx="3.6" ry="1.56" fill="#fff"/><circle cx="83.58" cy="-30.24" r="1.8" fill="#fff"/><circle cx="85.5" cy="-29.88" r="1.32" fill="#fff"/><ellipse cx="14.3" cy="-18.44" rx="2.1" ry="0.91" fill="#fff"/><circle cx="13.88" cy="-19.14" r="1.05" fill="#fff"/><circle cx="15" cy="-18.93" r="0.77" fill="#fff"/><ellipse cx="100.9" cy="-18.84" rx="2.1" ry="0.91" fill="#fff"/><circle cx="100.48" cy="-19.54" r="1.05" fill="#fff"/><circle cx="101.6" cy="-19.33" r="0.77" fill="#fff"/><circle cx="17.4" cy="12.6" r="0.7" fill="#43abe3"/><circle cx="98.6" cy="8.8" r="0.7" fill="#43abe3"/></g></svg>
<!-- s_dock -->
<div class="a" style="left:622px;top:109px;width:176px;height:8px;background:#434343;"></div>
<div class="a" style="left:622px;top:117px;width:27px;height:475px;background:#434343;"></div>
<div class="a" style="left:624px;top:117.2px;width:22.6px;height:58.4px;background:#535353;"></div>
<div class="a" style="left:624px;top:177.2px;width:22.6px;height:42.4px;background:#535353;"></div>
<div class="a" style="left:624px;top:221.2px;width:22.6px;height:40.6px;background:#535353;"></div>
<div class="a" style="left:624px;top:263.4px;width:22.6px;height:41.6px;background:#535353;"></div>
<div class="a" style="left:624px;top:306.6px;width:22.6px;height:24.8px;background:#535353;"></div>
<div class="a" style="left:624px;top:333px;width:22.6px;height:24.4px;background:#535353;"></div>
<div class="a" style="left:624px;top:358.2px;width:22.6px;height:233.8px;background:#535353;"></div>
<div class="t" style="left:635.4px;top:273px;font-size:10.5px;color:#d2d2d2;">A</div>
<div class="t" style="left:636.2px;top:290px;font-size:10.5px;color:#d2d2d2;">¶</div>
<div class="t" style="left:629.8px;top:314px;font-size:13.6px;color:#d4d4d4;font-family:'Liberation Serif',serif;font-style:italic;font-weight:bold">A</div>
<svg class="a" style="left:0;top:0" width="860" height="634" viewBox="0 0 860 634"><line x1="629.4" y1="120" x2="641.6" y2="120" stroke="#3c3c3c" stroke-width="1.5" stroke-dasharray="1 1.2"/><line x1="629.4" y1="180" x2="641.6" y2="180" stroke="#3c3c3c" stroke-width="1.5" stroke-dasharray="1 1.2"/><line x1="629.4" y1="224" x2="641.6" y2="224" stroke="#3c3c3c" stroke-width="1.5" stroke-dasharray="1 1.2"/><line x1="629.4" y1="266.2" x2="641.6" y2="266.2" stroke="#3c3c3c" stroke-width="1.5" stroke-dasharray="1 1.2"/><line x1="629.4" y1="309.4" x2="641.6" y2="309.4" stroke="#3c3c3c" stroke-width="1.5" stroke-dasharray="1 1.2"/><line x1="629.4" y1="335.8" x2="641.6" y2="335.8" stroke="#3c3c3c" stroke-width="1.5" stroke-dasharray="1 1.2"/><polyline points="640.35,111.5 638.85,112.8 640.35,114.1" fill="none" stroke="#9a9a9a" stroke-width="0.8"/><polyline points="642.75,111.5 641.25,112.8 642.75,114.1" fill="none" stroke="#9a9a9a" stroke-width="0.8"/><polyline points="789.65,111.5 791.15,112.8 789.65,114.1" fill="none" stroke="#9a9a9a" stroke-width="0.8"/><polyline points="792.05,111.5 793.55,112.8 792.05,114.1" fill="none" stroke="#9a9a9a" stroke-width="0.8"/><g transform="translate(635.4,131.6)" fill="none" stroke="#c6c6c6" stroke-width="1" stroke-linejoin="round" stroke-linecap="round"><circle r="3.5" fill="#cdcdcd" stroke="none"/><path d="M4,0L5.5,0M3.7,1.53L5.08,2.1M2.83,2.83L3.89,3.89M1.53,3.7L2.1,5.08M0,4L0,5.5M-1.53,3.7L-2.1,5.08M-2.83,2.83L-3.89,3.89M-3.7,1.53L-5.08,2.1M-4,0L-5.5,0M-3.7,-1.53L-5.08,-2.1M-2.83,-2.83L-3.89,-3.89M-1.53,-3.7L-2.1,-5.08M0,-4L0,-5.5M1.53,-3.7L2.1,-5.08M2.83,-2.83L3.89,-3.89M3.7,-1.53L5.08,-2.1" stroke-width="0.7" stroke="#b0b0b0"/></g><g transform="translate(635.4,148.8)" fill="none" stroke="#c6c6c6" stroke-width="1" stroke-linejoin="round" stroke-linecap="round"><path d="M-4.6,5 V-5.4 C1,-5 5,-1 5.4,5Z" fill="#9c9c9c" stroke="#c8c8c8" stroke-width="0.8"/><path d="M-4.6,5 V-1 C-1,-0.8 1.2,1.6 1.4,5Z" fill="#c8c8c8" stroke="none"/></g><g transform="translate(635.4,166.2)" fill="none" stroke="#c6c6c6" stroke-width="1" stroke-linejoin="round" stroke-linecap="round"><circle cx="-1.6" cy="0.2" r="3.4" stroke-width="0.9"/><circle cx="-1.6" cy="0.2" r="1.2" fill="#c6c6c6" stroke="none"/><path d="M0.6,-2.2 L4,-5 M0.8,2.6 L4,5.2" stroke-width="0.9"/><circle cx="4.2" cy="-5" r="1.1" fill="#c6c6c6" stroke="none"/><circle cx="4.2" cy="5.2" r="1.1" fill="#c6c6c6" stroke="none"/></g><g transform="translate(635.4,191.8)" fill="none" stroke="#c6c6c6" stroke-width="1" stroke-linejoin="round" stroke-linecap="round"><path d="M-4.6,-5.4 V5.6" stroke-width="0.9"/><rect x="-3.4" y="-3.8" width="4.6" height="3" fill="#c6c6c6" stroke="none"/><rect x="-3.4" y="1" width="8.4" height="3" fill="#c6c6c6" stroke="none"/></g><g transform="translate(635.4,209)" fill="none" stroke="#c6c6c6" stroke-width="1" stroke-linejoin="round" stroke-linecap="round"><rect x="-5" y="-4.8" width="6" height="6" fill="#c6c6c6" stroke="none"/><rect x="-1.4" y="-1.2" width="6.4" height="6.4" fill="#8e8e8e" stroke="#c6c6c6" stroke-width="0.9"/></g><g transform="translate(635.4,236)" fill="none" stroke="#c6c6c6" stroke-width="1" stroke-linejoin="round" stroke-linecap="round"><path d="M-3.4,-0.4 H3.4 L2.6,5.6 H-2.6Z" fill="#c6c6c6" stroke="none"/><path d="M-2,-0.6 V-4.4 M0,-0.6 V-6 M2.2,-0.6 V-3.6" stroke-width="1.2"/><path d="M-4.6,-3.6 L-3,-0.6 M4.8,-4 L3,-0.8" stroke-width="0.8"/></g><g transform="translate(635.4,252.6)" fill="none" stroke="#c6c6c6" stroke-width="1" stroke-linejoin="round" stroke-linecap="round"><circle cx="0" cy="-2.8" r="2.5" fill="#c6c6c6" stroke="none"/><circle cx="-2.7" cy="0.8" r="2.5" fill="#c6c6c6" stroke="none"/><circle cx="2.7" cy="0.8" r="2.5" fill="#c6c6c6" stroke="none"/><path d="M0,0 L-1.8,5.4 H1.8Z" fill="#c6c6c6" stroke="none"/></g><g transform="translate(635.4,278)" fill="none" stroke="#c6c6c6" stroke-width="1" stroke-linejoin="round" stroke-linecap="round"><rect x="-5.6" y="0.4" width="3.6" height="3.6" stroke-width="0.8"/><rect x="-3.8" y="2.2" width="3.6" height="3.6" stroke-width="0.8" fill="#777"/></g><g transform="translate(635.4,295)" fill="none" stroke="#c6c6c6" stroke-width="1" stroke-linejoin="round" stroke-linecap="round"><rect x="-5.6" y="0.6" width="3.6" height="3.6" stroke-width="0.8"/><rect x="-3.8" y="2.4" width="3.6" height="3.6" stroke-width="0.8" fill="#777"/></g><g transform="translate(635.4,346)" fill="none" stroke="#c6c6c6" stroke-width="1" stroke-linejoin="round" stroke-linecap="round"><path d="M0,-3.6 H-4.6 V4.8 H3.8 V0.4" stroke-width="1.1"/><path d="M-1,1.2 L4.8,-4.6 M1.4,-5 H5.2 V-1.2" stroke-width="1.1"/></g></svg>
<!-- s_panels -->
<div class="a" style="left:648.4px;top:116.8px;width:149.6px;height:475.2px;background:#434343;"></div>
<div class="a" style="left:648.4px;top:116.8px;width:149.6px;height:16.6px;background:#434343;"></div>
<div class="a" style="left:648.4px;top:133.4px;width:149.6px;height:62.4px;background:#535353;"></div>
<div class="a" style="left:648.4px;top:117.2px;width:27.2px;height:16.2px;background:#4a4a4a;"></div>
<div class="a" style="left:676.2px;top:117.2px;width:36.8px;height:16.2px;background:#4a4a4a;"></div>
<div class="a" style="left:740.2px;top:117.2px;width:34.6px;height:16.2px;background:#4a4a4a;"></div>
<div class="a" style="left:713.4px;top:116.8px;width:26.5px;height:17px;background:#535353;"></div>
<div class="t" style="left:654.3px;top:122px;font-size:7.5px;color:#b6b6b6;font-weight:bold;transform:scaleX(0.848);transform-origin:0 0;">Layers</div>
<div class="t" style="left:680.9px;top:122px;font-size:7.5px;color:#b6b6b6;font-weight:bold;transform:scaleX(0.868);transform-origin:0 0;">Artboards</div>
<div class="t" style="left:717.9px;top:122px;font-size:7.5px;color:#f0f0f0;font-weight:bold;transform:scaleX(0.883);transform-origin:0 0;">Links</div>
<div class="t" style="left:745.5px;top:122px;font-size:7.5px;color:#b6b6b6;font-weight:bold;transform:scaleX(0.881);transform-origin:0 0;">Libraries</div>
<div class="a" style="left:652.4px;top:137.6px;width:142.4px;height:45.2px;background:#4f4f4f;border:1px solid #484848"></div>
<div class="a" style="left:653px;top:158px;width:133.6px;height:0.8px;background:#474747;"></div>
<div class="a" style="left:653px;top:178.4px;width:133.6px;height:0.8px;background:#474747;"></div>
<div class="a" style="left:654.7px;top:139.9px;width:16px;height:15.8px;background:#d9dadb;"></div>
<div class="a" style="left:654.7px;top:160.4px;width:16px;height:15.8px;background:#d9dadb;"></div>
<div class="a" style="left:654.7px;top:181.2px;width:16px;height:1.6px;background:#d9dadb;"></div>
<div class="t" style="left:678.1px;top:144px;font-size:7.5px;color:#d4d4d4;transform:scaleX(0.937);transform-origin:0 0;">0140_2 Tourism.jpg</div>
<div class="t" style="left:678.1px;top:165px;font-size:7.5px;color:#d4d4d4;transform:scaleX(0.937);transform-origin:0 0;">0140_1 Tourism.jpg</div>
<div class="a" style="left:787.4px;top:138.4px;width:6.6px;height:43.6px;background:#4a4a4a;"></div>
<div class="a" style="left:787.8px;top:145.5px;width:5.8px;height:16.6px;background:#5e5e5e;border-radius:3px"></div>
<div class="a" style="left:648.4px;top:197.7px;width:149.6px;height:16.7px;background:#434343;"></div>
<div class="a" style="left:648.4px;top:214.4px;width:149.6px;height:117.3px;background:#535353;"></div>
<div class="a" style="left:648.4px;top:198.1px;width:39.2px;height:16.3px;background:#4a4a4a;"></div>
<div class="a" style="left:721.6px;top:198.1px;width:52.8px;height:16.3px;background:#4a4a4a;"></div>
<div class="a" style="left:688px;top:197.7px;width:33.3px;height:17px;background:#535353;"></div>
<div class="t" style="left:654.3px;top:203px;font-size:7.5px;color:#b6b6b6;font-weight:bold;transform:scaleX(0.850);transform-origin:0 0;">Swatches</div>
<div class="t" style="left:696.7px;top:203px;font-size:7.5px;color:#f0f0f0;font-weight:bold;transform:scaleX(0.878);transform-origin:0 0;">Stroke</div>
<div class="t" style="left:727.2px;top:203px;font-size:7.5px;color:#b6b6b6;font-weight:bold;transform:scaleX(0.872);transform-origin:0 0;">Graphic Styles</div>
<div class="t" style="left:667.9px;top:222px;font-size:7.5px;color:#d2d2d2;transform:scaleX(0.898);transform-origin:0 0;">Weight:</div>
<div class="a" style="left:694.3px;top:219.1px;width:9.3px;height:11.5px;background:#494949;"></div>
<div class="a" style="left:704.9px;top:219.1px;width:36.3px;height:11.5px;background:#3e3e3e;"></div>
<div class="t" style="left:706.8px;top:222px;font-size:7.5px;color:#d6d6d6;transform:scaleX(0.895);transform-origin:0 0;">1 pt</div>
<div class="a" style="left:741.8px;top:219.1px;width:10.2px;height:11.5px;background:#494949;"></div>
<div class="t" style="left:677.6px;top:238px;font-size:7.5px;color:#d2d2d2;transform:scaleX(0.821);transform-origin:0 0;">Cap:</div>
<div class="a" style="left:693.3px;top:234.5px;width:41.4px;height:13.2px;background:transparent;border:1px solid #5c5c5c;border-radius:1px"></div>
<div class="a" style="left:693.7px;top:234.9px;width:12.7px;height:12.4px;background:#2d2d2d;"></div>
<div class="t" style="left:668.3px;top:255px;font-size:7.5px;color:#d2d2d2;transform:scaleX(0.892);transform-origin:0 0;">Corner:</div>
<div class="a" style="left:693.3px;top:251.7px;width:41.4px;height:12.9px;background:transparent;border:1px solid #5c5c5c;border-radius:1px"></div>
<div class="a" style="left:693.7px;top:252.1px;width:12.7px;height:12.1px;background:#2d2d2d;"></div>
<div class="t" style="left:742.1px;top:255px;font-size:7.5px;color:#d2d2d2;transform:scaleX(0.938);transform-origin:0 0;">Limit:</div>
<div class="a" style="left:761.8px;top:252.3px;width:26.5px;height:11.8px;background:#3e3e3e;"></div>
<div class="t" style="left:764.8px;top:255px;font-size:7.5px;color:#d6d6d6;transform:scaleX(0.911);transform-origin:0 0;">10</div>
<div class="t" style="left:790.6px;top:255px;font-size:7.5px;color:#c0c0c0;">x</div>
<div class="t" style="left:652.4px;top:272px;font-size:7.5px;color:#d2d2d2;transform:scaleX(0.898);transform-origin:0 0;">Align Stroke:</div>
<div class="a" style="left:693.3px;top:268.4px;width:41.4px;height:12.9px;background:transparent;border:1px solid #5c5c5c;border-radius:1px"></div>
<div class="a" style="left:693.7px;top:268.8px;width:12.7px;height:12.1px;background:#2d2d2d;"></div>
<div class="a" style="left:652.4px;top:285px;width:142.4px;height:0.9px;background:#5f5f5f;"></div>
<div class="a" style="left:652.4px;top:292.8px;width:7.6px;height:7.6px;background:#4f4f4f;border:1px solid #9a9a9a;border-radius:1.5px"></div>
<div class="t" style="left:663.2px;top:293px;font-size:7.5px;color:#e6e6e6;font-weight:bold;transform:scaleX(0.823);transform-origin:0 0;">Dashed Line</div>
<div class="a" style="left:747.7px;top:289.7px;width:22.9px;height:12.4px;background:transparent;border:1px solid #5e5e5e;border-radius:1px"></div>
<div class="a" style="left:771.9px;top:289.7px;width:22.7px;height:12.4px;background:transparent;border:1px solid #5e5e5e;border-radius:1px"></div>
<div class="a" style="left:652.1px;top:306.4px;width:21.8px;height:12.6px;background:#585858;border-radius:1px"></div>
<div class="a" style="left:675.9px;top:306.4px;width:21.8px;height:12.6px;background:#585858;border-radius:1px"></div>
<div class="a" style="left:699.8px;top:306.4px;width:21.8px;height:12.6px;background:#585858;border-radius:1px"></div>
<div class="a" style="left:723.6px;top:306.4px;width:21.8px;height:12.6px;background:#585858;border-radius:1px"></div>
<div class="a" style="left:747.6px;top:306.4px;width:21.8px;height:12.6px;background:#585858;border-radius:1px"></div>
<div class="a" style="left:771.6px;top:306.4px;width:21.8px;height:12.6px;background:#585858;border-radius:1px"></div>
<div class="t" style="left:655.8px;top:320px;font-size:7.5px;color:#858585;transform:scaleX(0.849);transform-origin:0 0;">dash</div>
<div class="t" style="left:680.3px;top:320px;font-size:7.5px;color:#858585;transform:scaleX(0.895);transform-origin:0 0;">gap</div>
<div class="t" style="left:702.7px;top:320px;font-size:7.5px;color:#858585;transform:scaleX(0.892);transform-origin:0 0;">dash</div>
<div class="t" style="left:728.7px;top:320px;font-size:7.5px;color:#858585;transform:scaleX(0.927);transform-origin:0 0;">gap</div>
<div class="t" style="left:751.4px;top:320px;font-size:7.5px;color:#858585;transform:scaleX(0.892);transform-origin:0 0;">dash</div>
<div class="t" style="left:777.5px;top:320px;font-size:7.5px;color:#858585;transform:scaleX(0.935);transform-origin:0 0;">gap</div>
<div class="a" style="left:648.4px;top:333.6px;width:149.6px;height:16.7px;background:#434343;"></div>
<div class="a" style="left:648.4px;top:350.3px;width:149.6px;height:62.4px;background:#535353;"></div>
<div class="a" style="left:680.4px;top:334px;width:52.8px;height:16.3px;background:#4a4a4a;"></div>
<div class="a" style="left:733.8px;top:334px;width:37.6px;height:16.3px;background:#4a4a4a;"></div>
<div class="a" style="left:648.4px;top:333.6px;width:31.6px;height:17px;background:#535353;"></div>
<div class="t" style="left:658px;top:339px;font-size:7.5px;color:#f0f0f0;font-weight:bold;transform:scaleX(0.873);transform-origin:0 0;">Color</div>
<div class="t" style="left:685.6px;top:339px;font-size:7.5px;color:#b6b6b6;font-weight:bold;transform:scaleX(0.892);transform-origin:0 0;">Transparency</div>
<div class="t" style="left:739.5px;top:339px;font-size:7.5px;color:#b6b6b6;font-weight:bold;transform:scaleX(0.898);transform-origin:0 0;">Gradient</div>
<div class="a" style="left:652.4px;top:356.9px;width:7.6px;height:7.4px;background:#fff;"></div>
<div class="a" style="left:660px;top:356.9px;width:8.3px;height:7.4px;background:#000;"></div>
<div class="a" style="left:668.3px;top:356.9px;width:8px;height:7.4px;background:#fff;"></div>
<div class="a" style="left:652.8px;top:371.7px;width:134.5px;height:36.3px;background:linear-gradient(90deg,#ee1c25 0%,#f7941d 8%,#fdec2a 16%,#8dc63f 29%,#39b54a 38%,#12a99a 47%,#27aae1 54%,#3b57a6 63%,#4f4a9c 72%,#9a4f9e 82%,#e8308a 92%,#ed1c24 100%);"></div>
<div class="a" style="left:652.8px;top:371.7px;width:134.5px;height:36.3px;background:linear-gradient(180deg,rgba(255,255,255,1) 0%,rgba(255,255,255,0.8) 12%,rgba(255,255,255,0.35) 30%,rgba(255,255,255,0) 48%,rgba(0,0,0,0) 56%,rgba(0,0,0,0.3) 72%,rgba(0,0,0,0.7) 88%,rgba(0,0,0,1) 100%);"></div>
<div class="a" style="left:648.4px;top:414.5px;width:149.6px;height:16.8px;background:#434343;"></div>
<div class="a" style="left:648.4px;top:431.3px;width:149.6px;height:52px;background:#535353;"></div>
<div class="a" style="left:648.4px;top:414.5px;width:47.8px;height:17px;background:#535353;"></div>
<div class="t" style="left:658.4px;top:420px;font-size:7.5px;color:#f0f0f0;font-weight:bold;transform:scaleX(0.913);transform-origin:0 0;">Transform</div>
<div class="t" style="left:672.5px;top:438px;font-size:7.5px;color:#8c8c8c;font-weight:bold;transform:scaleX(0.747);transform-origin:0 0;">X:</div>
<div class="a" style="left:680.3px;top:435.6px;width:41.4px;height:12.4px;background:#585858;border-radius:1px"></div>
<div class="t" style="left:683.7px;top:438px;font-size:7.5px;color:#6c6c6c;transform:scaleX(0.910);transform-origin:0 0;">0 in</div>
<div class="t" style="left:725.4px;top:438px;font-size:7.5px;color:#8c8c8c;font-weight:bold;transform:scaleX(0.784);transform-origin:0 0;">W:</div>
<div class="a" style="left:734.3px;top:435.6px;width:42.4px;height:12.4px;background:#585858;border-radius:1px"></div>
<div class="t" style="left:737.7px;top:438px;font-size:7.5px;color:#6c6c6c;transform:scaleX(0.910);transform-origin:0 0;">0 in</div>
<div class="t" style="left:672.5px;top:454px;font-size:7.5px;color:#8c8c8c;font-weight:bold;transform:scaleX(0.807);transform-origin:0 0;">Y:</div>
<div class="a" style="left:680.3px;top:451.7px;width:41.4px;height:12.5px;background:#585858;border-radius:1px"></div>
<div class="t" style="left:683.7px;top:454px;font-size:7.5px;color:#6c6c6c;transform:scaleX(0.910);transform-origin:0 0;">0 in</div>
<div class="t" style="left:726.4px;top:454px;font-size:7.5px;color:#8c8c8c;font-weight:bold;transform:scaleX(0.809);transform-origin:0 0;">H:</div>
<div class="a" style="left:734.3px;top:451.7px;width:42.4px;height:12.5px;background:#585858;border-radius:1px"></div>
<div class="t" style="left:737.7px;top:454px;font-size:7.5px;color:#6c6c6c;transform:scaleX(0.910);transform-origin:0 0;">0 in</div>
<div class="a" style="left:779px;top:442.4px;width:14.8px;height:14.4px;background:#2e2e2e;border-radius:1.5px"></div>
<div class="a" style="left:680.3px;top:468.4px;width:39.1px;height:11.2px;background:#585858;border-radius:1px"></div>
<div class="a" style="left:734.3px;top:468.4px;width:38.7px;height:11.2px;background:#585858;border-radius:1px"></div>
<div class="t" style="left:683.1px;top:471px;font-size:7.5px;color:#6c6c6c;">0°</div>
<div class="t" style="left:737.1px;top:471px;font-size:7.5px;color:#6c6c6c;">0°</div>
<div class="t" style="left:676.2px;top:471px;font-size:7.5px;color:#8c8c8c;">:</div>
<div class="t" style="left:730.4px;top:471px;font-size:7.5px;color:#8c8c8c;">:</div>
<div class="a" style="left:648.4px;top:485.7px;width:149.6px;height:16.7px;background:#434343;"></div>
<div class="a" style="left:648.4px;top:502.4px;width:149.6px;height:89.6px;background:#535353;"></div>
<div class="a" style="left:694px;top:486.1px;width:41px;height:16.3px;background:#4a4a4a;"></div>
<div class="a" style="left:735.6px;top:486.1px;width:39.2px;height:16.3px;background:#4a4a4a;"></div>
<div class="a" style="left:648.4px;top:485.7px;width:45.3px;height:17px;background:#535353;"></div>
<div class="t" style="left:658px;top:491px;font-size:7.5px;color:#f0f0f0;font-weight:bold;transform:scaleX(0.888);transform-origin:0 0;">Character</div>
<div class="t" style="left:699.3px;top:491px;font-size:7.5px;color:#b6b6b6;font-weight:bold;transform:scaleX(0.884);transform-origin:0 0;">Paragraph</div>
<div class="t" style="left:740.3px;top:491px;font-size:7.5px;color:#b6b6b6;font-weight:bold;transform:scaleX(0.905);transform-origin:0 0;">OpenType</div>
<div class="a" style="left:652.1px;top:506.5px;width:76.2px;height:13.2px;background:#4e4e4e;border:1px solid #646464;border-radius:2px"></div>
<div class="t" style="left:672px;top:510px;font-size:7.5px;color:#e6e6e6;font-weight:bold;transform:scaleX(0.861);transform-origin:0 0;">Touch Type Tool</div>
<div class="t" style="left:659.6px;top:510px;font-size:7.6px;color:#d8d8d8;font-family:'Liberation Serif',serif;">T</div>
<div class="a" style="left:652.8px;top:524.2px;width:129.9px;height:10.8px;background:#3e3e3e;"></div>
<div class="a" style="left:784.2px;top:524.2px;width:9.6px;height:10.8px;background:#494949;"></div>
<div class="t" style="left:667.7px;top:526px;font-size:7.5px;color:#dadada;transform:scaleX(0.899);transform-origin:0 0;">Myriad Pro</div>
<div class="a" style="left:652.8px;top:540.8px;width:129.9px;height:10.8px;background:#3e3e3e;"></div>
<div class="a" style="left:784.2px;top:540.8px;width:9.6px;height:10.8px;background:#494949;"></div>
<div class="t" style="left:656.2px;top:543px;font-size:7.5px;color:#e0e0e0;font-weight:bold;transform:scaleX(0.817);transform-origin:0 0;">Regular</div>
<div class="a" style="left:652.4px;top:555px;width:142.4px;height:0.8px;background:#4a4a4a;"></div>
<div class="a" style="left:666.4px;top:560.7px;width:8.4px;height:10.8px;background:#494949;"></div>
<div class="a" style="left:677px;top:560.7px;width:30.3px;height:10.8px;background:#3e3e3e;"></div>
<div class="t" style="left:679px;top:563px;font-size:7.5px;color:#dadada;transform:scaleX(0.953);transform-origin:0 0;">12 pt</div>
<div class="a" style="left:708.8px;top:560.7px;width:9.7px;height:10.8px;background:#494949;"></div>
<div class="a" style="left:741.4px;top:560.7px;width:9.3px;height:10.8px;background:#494949;"></div>
<div class="a" style="left:752.5px;top:560.7px;width:30.2px;height:10.8px;background:#3e3e3e;"></div>
<div class="t" style="left:754px;top:563px;font-size:7.5px;color:#dadada;transform:scaleX(0.949);transform-origin:0 0;">(14.4 pt)</div>
<div class="a" style="left:784.2px;top:560.7px;width:9.6px;height:10.8px;background:#494949;"></div>
<div class="a" style="left:666.4px;top:577.1px;width:8.4px;height:10.8px;background:#494949;"></div>
<div class="a" style="left:677px;top:577.1px;width:30.3px;height:10.8px;background:#3e3e3e;"></div>
<div class="t" style="left:679px;top:579px;font-size:7.5px;color:#dadada;transform:scaleX(0.940);transform-origin:0 0;">Auto</div>
<div class="a" style="left:708.8px;top:577.1px;width:9.7px;height:10.8px;background:#494949;"></div>
<div class="a" style="left:741.4px;top:577.1px;width:9.3px;height:10.8px;background:#494949;"></div>
<div class="a" style="left:752.5px;top:577.1px;width:30.2px;height:10.8px;background:#3e3e3e;"></div>
<div class="t" style="left:754px;top:579px;font-size:7.5px;color:#dadada;">0</div>
<div class="a" style="left:784.2px;top:577.1px;width:9.6px;height:10.8px;background:#494949;"></div>
<div class="t" style="left:652.2px;top:565px;font-size:7.6px;color:#d0d0d0;font-weight:bold;font-family:'Liberation Serif',serif;">T</div>
<div class="t" style="left:656.2px;top:562px;font-size:11px;color:#d0d0d0;font-weight:bold;font-family:'Liberation Serif',serif;">T</div>
<div class="t" style="left:732.4px;top:561px;font-size:5.4px;color:#d0d0d0;font-family:'Liberation Serif',serif;">A</div>
<div class="t" style="left:731.6px;top:565px;font-size:7.4px;color:#d0d0d0;font-family:'Liberation Serif',serif;">A</div>
<div class="t" style="left:651.8px;top:578px;font-size:8px;color:#bdbdbd;">V</div>
<div class="t" style="left:656.4px;top:578px;font-size:8px;color:#bdbdbd;">A</div>
<div class="a" style="left:727.4px;top:577.6px;width:10.8px;height:7.4px;background:#cfcfcf;"></div>
<div class="t" style="left:727.9px;top:578px;font-size:7.4px;color:#444;font-weight:bold;transform:scaleX(0.987);transform-origin:0 0;">VA</div>
<svg class="a" style="left:0;top:0" width="860" height="634" viewBox="0 0 860 634"><path d="M788.4,123.2H794.8M788.4,125.4H794.8M788.4,127.6H794.8" stroke="#a6a6a6" stroke-width="1"/><g transform="translate(662.7,147.4)"><ellipse cx="0" cy="5.6" rx="4.6" ry="0.8" fill="#8a8a8a"/><path d="M-5,-0.6 H5 L0.6,4.8 L-0.4,4.8Z" fill="#6b4a2b"/><rect x="-5.2" y="-1.6" width="10.4" height="1.6" fill="#cfd9a0"/><rect x="-4.8" y="-2.2" width="9.6" height="1" fill="#5db6e4"/><path d="M-0.6,-2.2 l0.8,-2.6 l1,2.6Z" fill="#3dae49"/><circle cx="2.8" cy="-4.4" r="1" fill="#f08a2e"/></g><g transform="translate(662.7,168)"><ellipse cx="0" cy="5.6" rx="4.6" ry="0.8" fill="#8a8a8a"/><path d="M-5,-0.6 H5 L0.6,4.8 L-0.4,4.8Z" fill="#6b4a2b"/><rect x="-5.2" y="-1.4" width="10.4" height="1.4" fill="#c67a74"/><path d="M-2.6,-1.4 L-0.2,-3.8 L2.2,-1.4Z" fill="#5b8fa3"/><rect x="0.6" y="-4.2" width="1.6" height="2.8" fill="#8b4a42"/><circle cx="-1.4" cy="-5" r="1.2" fill="#e9456b"/></g><polyline points="789,142.5 790.7,140.7 792.4,142.5" fill="none" stroke="#8c8c8c" stroke-width="0.8"/><polyline points="789,179.3 790.7,181.1 792.4,179.3" fill="none" stroke="#8c8c8c" stroke-width="0.8"/><path d="M658.8,186.2 L662,189.2 L658.8,192.2Z" fill="#cfcfcf"/><g fill="none" stroke="#6a6a6a" stroke-width="0.9"><path d="M705.6,191.6 h6.6 a2,2 0 0 0 0,-4 a2.6,2.6 0 0 0 -5,-0.4 a2.2,2.2 0 0 0 -1.6,4.4Z"/><path d="M708.4,191.8 h5.4 a1.6,1.6 0 0 0 0,-3.2"/><rect x="721.4" y="187.8" width="4.6" height="2.8" rx="1.4"/><rect x="724.8" y="187.8" width="4.6" height="2.8" rx="1.4"/><path d="M737.6,189.4 h4 M740.4,187.6 l1.6,1.8 l-1.6,1.8"/><path d="M742.6,185.8 h2 l1.6,1.6 v4.8 h-3.6"/><path d="M754.6,188.2 a3.2,3.2 0 0 1 5.8,-0.8 M760.6,190.2 a3.2,3.2 0 0 1 -5.8,0.8"/><path d="M759.6,185.6 l1,1.9 l-2,0.3 M755.6,192.8 l-1,-1.9 l2,-0.3" stroke-width="0.8"/></g><path d="M772,192.6 l0.6,-2 l4.8,-4.8 l1.4,1.4 l-4.8,4.8Z" fill="#6a6a6a"/><polyline points="690.7,205.15 691.9,203.85 693.1,205.15" fill="none" stroke="#a8a8a8" stroke-width="0.7"/><polyline points="690.7,207.25 691.9,208.55 693.1,207.25" fill="none" stroke="#a8a8a8" stroke-width="0.7"/><path d="M788.4,204.2H794.8M788.4,206.4H794.8M788.4,208.6H794.8" stroke="#a6a6a6" stroke-width="1"/><polyline points="697.2,223.05 699,221.15 700.8,223.05" fill="none" stroke="#c8c8c8" stroke-width="0.9"/><polyline points="697.2,226.75 699,228.65 700.8,226.75" fill="none" stroke="#c8c8c8" stroke-width="0.9"/><polyline points="744.35,223.8 746.6,226.2 748.85,223.8" fill="none" stroke="#cfcfcf" stroke-width="1"/><path d="M707.4,234.9V247.3M721.2,234.9V247.3" stroke="#5c5c5c" stroke-width="0.8"/><rect x="698.6" y="237.4" width="5.4" height="7.4" fill="#d6d6d6"/><path d="M696.4,241.1 H703" stroke="#2d2d2d" stroke-width="0.9"/><path d="M696.4,241.1 H699" stroke="#d6d6d6" stroke-width="0.9"/><path d="M718,237.4 H714.2 a3.7,3.7 0 0 0 0,7.4 H718Z" fill="#d6d6d6"/><path d="M713.4,241.1 H718" stroke="#535353" stroke-width="0.9"/><rect x="724.6" y="237.4" width="7.4" height="7.4" fill="#d6d6d6"/><path d="M727.6,241.1 H732" stroke="#535353" stroke-width="0.9"/><path d="M707.4,252.1V264.2M721.2,252.1V264.2" stroke="#5c5c5c" stroke-width="0.8"/><rect x="696.2" y="254.6" width="7.6" height="7.4" fill="#d6d6d6"/><path d="M703.8,258.5 H699.9 V262" stroke="#2d2d2d" stroke-width="0.9" fill="none"/><rect x="699" y="257.6" width="1.8" height="1.8" fill="#2d2d2d"/><path d="M710.2,262 V258.6 a4,4 0 0 1 4,-4 H717.8 V262Z" fill="#d6d6d6"/><path d="M717.8,258.5 H713.9 V262" stroke="#535353" stroke-width="0.9" fill="none"/><rect x="713" y="257.6" width="1.8" height="1.8" fill="#535353"/><path d="M724.2,262 V257.8 L727.4,254.6 H731.8 V262Z" fill="#d6d6d6"/><path d="M731.8,258.5 H727.9 V262" stroke="#535353" stroke-width="0.9" fill="none"/><rect x="727" y="257.6" width="1.8" height="1.8" fill="#535353"/><path d="M707.4,268.8V280.9M721.2,268.8V280.9" stroke="#5c5c5c" stroke-width="0.8"/><path d="M696.8,270.8 V278.6 H704" stroke="#d6d6d6" stroke-width="1.2" fill="none"/><path d="M698.6,271.4 V276.8 H704" stroke="#d6d6d6" stroke-width="1.4" fill="none"/><path d="M710.4,279 V273.6 H713.6 V270.8 H715 V275 H718 V279Z" fill="#d6d6d6"/><path d="M710.4,277 H713 V273" stroke="#535353" stroke-width="0.7" fill="none"/><path d="M724.6,279 V270.8 H728 V275.4 H732 V279Z" fill="#d6d6d6"/><path d="M728,270.8 V275.4 H732" stroke="#8a8a8a" stroke-width="0.7" fill="none"/><rect x="751" y="292.8" width="16.4" height="6.2" fill="none" stroke="#7c7c7c" stroke-width="0.9" stroke-dasharray="4 2.4"/><path d="M775.2,295.6 V292.8 H778.6 M781,292.8 H785.6 M788,292.8 H791.4 V295.6 M791.4,296.4 V299 H788 M785.6,299 H781 M778.6,299 H775.2 V296.4" fill="none" stroke="#7c7c7c" stroke-width="0.9"/><polyline points="652.2,341.35 653.4,340.05 654.6,341.35" fill="none" stroke="#a8a8a8" stroke-width="0.7"/><polyline points="652.2,343.45 653.4,344.75 654.6,343.45" fill="none" stroke="#a8a8a8" stroke-width="0.7"/><path d="M788.4,340.1H794.8M788.4,342.3H794.8M788.4,344.5H794.8" stroke="#a6a6a6" stroke-width="1"/><path d="M652.8,363.9 L659.6,357.3" stroke="#e81e25" stroke-width="1.3"/><polyline points="652.2,421.95 653.4,420.65 654.6,421.95" fill="none" stroke="#a8a8a8" stroke-width="0.7"/><polyline points="652.2,424.05 653.4,425.35 654.6,424.05" fill="none" stroke="#a8a8a8" stroke-width="0.7"/><path d="M788.4,421.1H794.8M788.4,423.3H794.8M788.4,425.5H794.8" stroke="#a6a6a6" stroke-width="1"/><rect x="652.6" y="444" width="2.8" height="2.8" fill="none" stroke="#c0c0c0" stroke-width="0.7"/><rect x="657.2" y="444" width="2.8" height="2.8" fill="none" stroke="#c0c0c0" stroke-width="0.7"/><rect x="661.8" y="444" width="2.8" height="2.8" fill="none" stroke="#c0c0c0" stroke-width="0.7"/><rect x="652.6" y="448.6" width="2.8" height="2.8" fill="none" stroke="#c0c0c0" stroke-width="0.7"/><rect x="657.2" y="448.6" width="2.8" height="2.8" fill="#fff"/><rect x="661.8" y="448.6" width="2.8" height="2.8" fill="none" stroke="#c0c0c0" stroke-width="0.7"/><rect x="652.6" y="453.2" width="2.8" height="2.8" fill="none" stroke="#c0c0c0" stroke-width="0.7"/><rect x="657.2" y="453.2" width="2.8" height="2.8" fill="none" stroke="#c0c0c0" stroke-width="0.7"/><rect x="661.8" y="453.2" width="2.8" height="2.8" fill="none" stroke="#c0c0c0" stroke-width="0.7"/><path d="M655.6,445.4h1.6M660.2,445.4h1.6M655.6,454.6h1.6M660.2,454.6h1.6M654,447v1.6M654,451.6v1.6M663.2,447v1.6M663.2,451.6v1.6" stroke="#c0c0c0" stroke-width="0.6"/><rect x="784.6" y="444.8" width="3.6" height="5.4" rx="1.8" fill="none" stroke="#d0d0d0" stroke-width="1"/><rect x="784.6" y="449" width="3.6" height="5.4" rx="1.8" fill="none" stroke="#d0d0d0" stroke-width="1"/><polyline points="710.2,473.1 712.3,475.3 714.4,473.1" fill="none" stroke="#6e6e6e" stroke-width="0.9"/><polyline points="763.8,473.1 765.9,475.3 768,473.1" fill="none" stroke="#6e6e6e" stroke-width="0.9"/><path d="M669.8,476.8 H675.6 M669.8,476.8 L674,471.4" stroke="#8c8c8c" stroke-width="0.9" fill="none"/><path d="M723.4,476.8 L725.6,471.6 H729.8 L727.6,476.8Z" fill="#8c8c8c"/><polyline points="652.2,492.95 653.4,491.65 654.6,492.95" fill="none" stroke="#a8a8a8" stroke-width="0.7"/><polyline points="652.2,495.05 653.4,496.35 654.6,495.05" fill="none" stroke="#a8a8a8" stroke-width="0.7"/><path d="M788.4,491.8H794.8M788.4,494H794.8M788.4,496.2H794.8" stroke="#a6a6a6" stroke-width="1"/><rect x="657.6" y="509.2" width="8.2" height="8.2" fill="none" stroke="#c8c8c8" stroke-width="0.8"/><g fill="#c8c8c8"><rect x="656.6" y="508.2" width="2" height="2"/><rect x="664.8" y="508.2" width="2" height="2"/><rect x="656.6" y="516.4" width="2" height="2"/><rect x="664.8" y="516.4" width="2" height="2"/></g><circle cx="659.6" cy="528.8" r="2" fill="none" stroke="#c4c4c4" stroke-width="0.9"/><line x1="658.2" y1="530.4" x2="656.2" y2="532.6" stroke="#c4c4c4" stroke-width="1"/><polyline points="662.8,530.6 664,531.8 665.2,530.6" fill="none" stroke="#c4c4c4" stroke-width="0.8"/><polyline points="786.55,528.6 788.8,531 791.05,528.6" fill="none" stroke="#cfcfcf" stroke-width="1"/><polyline points="786.55,545.2 788.8,547.6 791.05,545.2" fill="none" stroke="#cfcfcf" stroke-width="1"/><polyline points="668.8,564.35 670.6,562.45 672.4,564.35" fill="none" stroke="#c8c8c8" stroke-width="0.9"/><polyline points="668.8,568.05 670.6,569.95 672.4,568.05" fill="none" stroke="#c8c8c8" stroke-width="0.9"/><polyline points="711.25,565.1 713.5,567.5 715.75,565.1" fill="none" stroke="#cfcfcf" stroke-width="1"/><polyline points="744.2,564.35 746,562.45 747.8,564.35" fill="none" stroke="#c8c8c8" stroke-width="0.9"/><polyline points="744.2,568.05 746,569.95 747.8,568.05" fill="none" stroke="#c8c8c8" stroke-width="0.9"/><polyline points="786.55,565.1 788.8,567.5 791.05,565.1" fill="none" stroke="#cfcfcf" stroke-width="1"/><polyline points="668.8,580.75 670.6,578.85 672.4,580.75" fill="none" stroke="#c8c8c8" stroke-width="0.9"/><polyline points="668.8,584.45 670.6,586.35 672.4,584.45" fill="none" stroke="#c8c8c8" stroke-width="0.9"/><polyline points="711.25,581.5 713.5,583.9 715.75,581.5" fill="none" stroke="#cfcfcf" stroke-width="1"/><polyline points="744.2,580.75 746,578.85 747.8,580.75" fill="none" stroke="#c8c8c8" stroke-width="0.9"/><polyline points="744.2,584.45 746,586.35 747.8,584.45" fill="none" stroke="#c8c8c8" stroke-width="0.9"/><polyline points="786.55,581.5 788.8,583.9 791.05,581.5" fill="none" stroke="#cfcfcf" stroke-width="1"/><path d="M729,562.4 V570.6 M727.8,563.8 L729,562.2 L730.2,563.8 M727.8,569.2 L729,570.8 L730.2,569.2" stroke="#c8c8c8" stroke-width="0.7" fill="none"/><path d="M731,566.6 H738" stroke="#c8c8c8" stroke-width="0.5"/><path d="M654.4,587 H662 M656,585.8 L654.4,587 L656,588.2" stroke="#bdbdbd" stroke-width="0.7" fill="none"/><path d="M655.4,578 L659.6,586" stroke="#bdbdbd" stroke-width="0.6"/><path d="M727.6,587.2 H738 M729,586 L727.6,587.2 L729,588.4 M736.6,586 L738,587.2 L736.6,588.4" stroke="#c8c8c8" stroke-width="0.7" fill="none"/></svg>
<!-- s_callouts -->
<svg class="a" style="left:0;top:0" width="860" height="634" viewBox="0 0 860 634"><path d="M275.1,54.4 V93.4" stroke="#f08c92" stroke-width="1.2" fill="none"/><path d="M191,112.6 V93.6 H369.2 V112.6" stroke="#e0262d" stroke-width="1.2" fill="none"/><path d="M440.6,54.4 V72.6 M647.2,54.4 V72.2 M697.4,54.4 V115" stroke="#f08c92" stroke-width="1.2" fill="none"/><circle cx="791.3" cy="112.8" r="6.2" fill="none" stroke="#e0262d" stroke-width="1.2"/><path d="M797.6,113 H814.4" stroke="#f08c92" stroke-width="1.2" fill="none"/><path d="M801.4,119.2 H810.3 V591.5 H801.4" stroke="#ee5a62" stroke-width="1.5" fill="none"/><path d="M811,355.5 H821.4" stroke="#f08c92" stroke-width="1.2" fill="none"/><path d="M49.8,97.6 H66.6" stroke="#f08c92" stroke-width="1.2" fill="none"/><path d="M60.8,111.5 H51.8 V444.6 H60.6" stroke="#ee5a62" stroke-width="1.5" fill="none"/><path d="M40.6,208.4 H51" stroke="#f08c92" stroke-width="1.2" fill="none"/></svg>
<div class="t" style="left:271.55px;top:41px;font-size:10.4px;font-weight:bold;color:#151515;text-rendering:geometricPrecision;transform:scaleX(0.892);transform-origin:0 0">A</div>
<div class="t" style="left:436.7px;top:41px;font-size:10.4px;font-weight:bold;color:#151515;text-rendering:geometricPrecision;transform:scaleX(0.746);transform-origin:0 0">B</div>
<div class="t" style="left:644.05px;top:41px;font-size:10.4px;font-weight:bold;color:#151515;text-rendering:geometricPrecision;transform:scaleX(0.786);transform-origin:0 0">C</div>
<div class="t" style="left:694.1px;top:41px;font-size:10.4px;font-weight:bold;color:#151515;text-rendering:geometricPrecision;transform:scaleX(0.826);transform-origin:0 0">D</div>
<div class="t" style="left:818.95px;top:109px;font-size:10.4px;font-weight:bold;color:#151515;text-rendering:geometricPrecision;transform:scaleX(0.735);transform-origin:0 0">E</div>
<div class="t" style="left:825.8px;top:352px;font-size:10.4px;font-weight:bold;color:#151515;text-rendering:geometricPrecision;transform:scaleX(0.724);transform-origin:0 0">F</div>
<div class="t" style="left:40.8px;top:95px;font-size:10.4px;font-weight:bold;color:#151515;text-rendering:geometricPrecision;transform:scaleX(0.791);transform-origin:0 0">G</div>
<div class="t" style="left:30.6px;top:205px;font-size:10.4px;font-weight:bold;color:#151515;text-rendering:geometricPrecision;transform:scaleX(0.799);transform-origin:0 0">H</div>
</div>
</body></html>
